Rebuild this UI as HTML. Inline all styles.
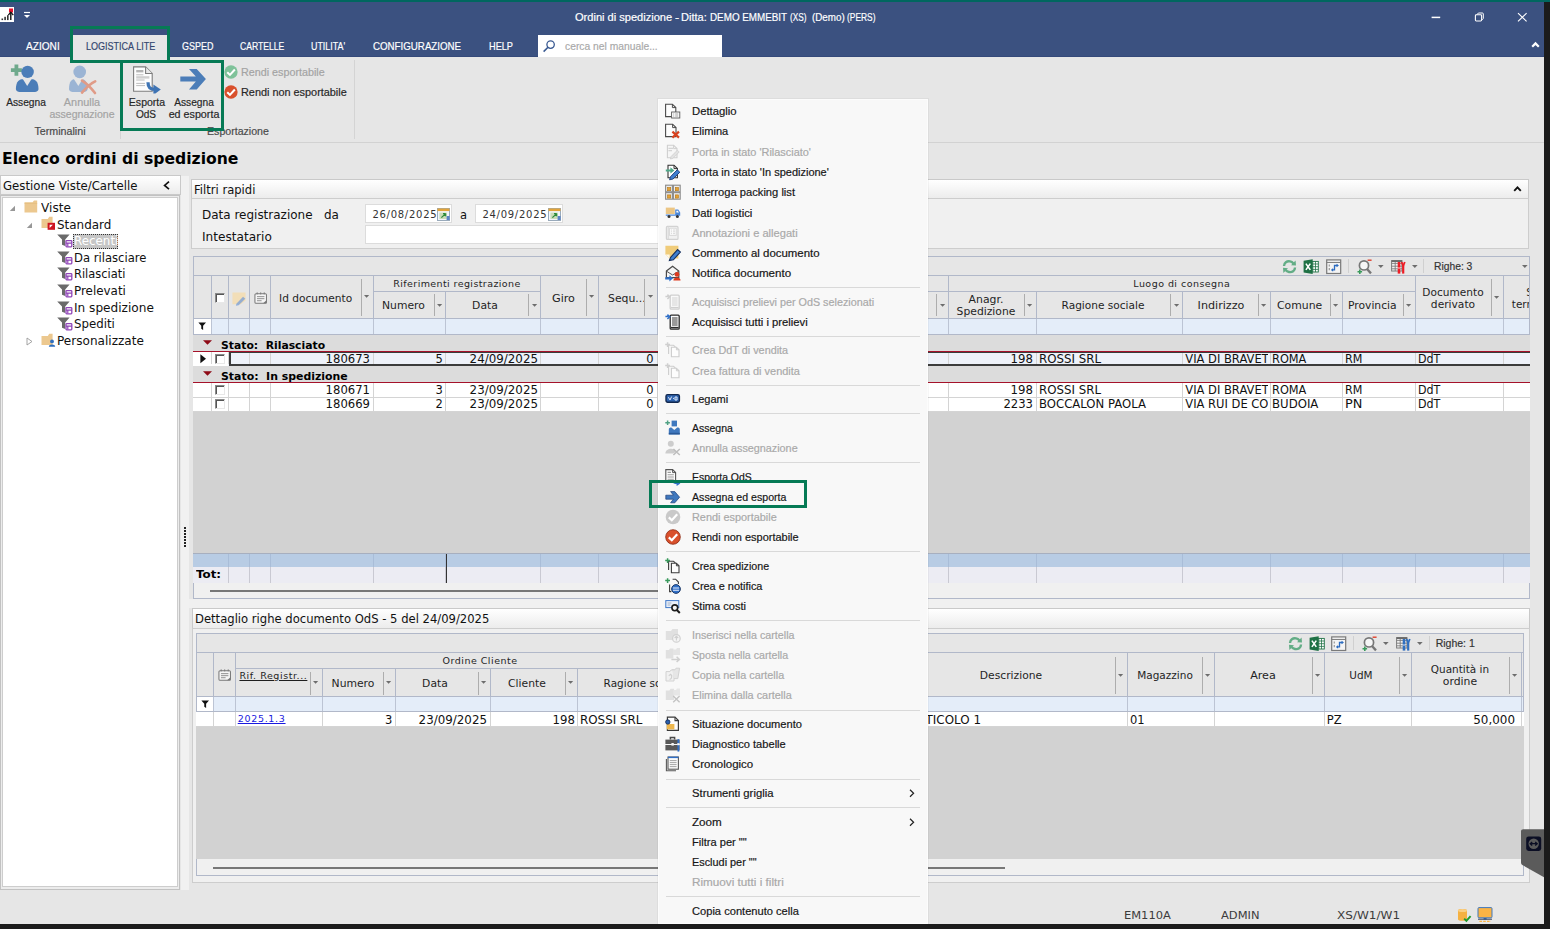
<!DOCTYPE html>
<html lang="it"><head><meta charset="utf-8"><title>Ordini di spedizione</title>
<style>
html,body{margin:0;padding:0}
body{width:1550px;height:929px;position:relative;overflow:hidden;background:#e6e6e6;}
div,span,svg,header,nav,section,aside,footer,menu,h1,a{position:absolute;box-sizing:border-box;margin:0;padding:0;display:block}
svg{overflow:visible}
.t{white-space:pre;font-weight:normal}
.s{font-family:"Liberation Sans",sans-serif;-webkit-text-stroke:0.18px currentColor}
.v{font-family:"DejaVu Sans","Liberation Sans",sans-serif}
.hl{pointer-events:none}
</style></head>
<body>
<header class="titlebar" style="left:0px;top:2px;width:1544px;height:55px;background:#3b5180;">
<div style="left:0px;top:5px;width:14px;height:15px;background:#fff;"></div>
<svg style="left:0px;top:5px;" width="14" height="15" viewBox="0 0 14 15"><rect x="9" y="1.5" width="4" height="4" fill="#e8112d"/><path d="M10.8 5 L10.8 13" stroke="#111" stroke-width="1.4"/><path d="M8.3 8.2 L10.8 5.2 L13.3 8.2" fill="none" stroke="#111" stroke-width="1.3"/><rect x="1.5" y="11.5" width="1.6" height="1.6" fill="#333"/><rect x="4.3" y="9.8" width="1.6" height="3.3" fill="#333"/><rect x="7" y="8.2" width="1.6" height="4.9" fill="#333"/></svg>
<svg style="left:22px;top:8px;" width="10" height="10" viewBox="0 0 10 10"><path d="M2 2.5 H8" stroke="#fff" stroke-width="1.2"/><path d="M2 5 H8 L5 8 Z" fill="#fff"/></svg>
<div class="title" style="left:570px;top:8px;width:312px;height:16px;">
<span class="t s" style="top:1px;font-size:10.5px;line-height:12px;left:5.23px;color:#fff;transform:scaleX(1.0533);transform-origin:0 0;">Ordini di spedizione</span>
<span class="t s" style="top:1px;font-size:10.5px;line-height:12px;left:105.43px;color:#fff;transform:scaleX(1.1814);transform-origin:0 0;">-</span>
<span class="t s" style="top:1px;font-size:10.5px;line-height:12px;left:111.23px;color:#fff;transform:scaleX(1.0538);transform-origin:0 0;">Ditta:</span>
<span class="t s" style="top:1px;font-size:10.5px;line-height:12px;left:139.83px;color:#fff;transform:scaleX(0.9376);transform-origin:0 0;">DEMO EMMEBIT</span>
<span class="t s" style="top:1px;font-size:10.5px;line-height:12px;left:219.53px;color:#fff;transform:scaleX(0.7874);transform-origin:0 0;">(XS)</span>
<span class="t s" style="top:1px;font-size:10.5px;line-height:12px;left:241.53px;color:#fff;transform:scaleX(0.9349);transform-origin:0 0;">(Demo)</span>
<span class="t s" style="top:1px;font-size:10.5px;line-height:12px;left:277.33px;color:#fff;transform:scaleX(0.7989);transform-origin:0 0;">(PERS)</span>
</div>
<svg style="left:1428px;top:8px;" width="16" height="14" viewBox="0 0 16 14"><path d="M3.6 7.4 H12.2" stroke="#fff" stroke-width="1.5"/></svg>
<svg style="left:1472px;top:8px;" width="16" height="14" viewBox="0 0 16 14"><rect x="3.4" y="4.8" width="6.2" height="6.2" rx="0.9" fill="none" stroke="#fff" stroke-width="1.1"/><path d="M5 4.6 L6.4 3 H10.4 a0.9 0.9 0 0 1 0.9 0.9 V8.4 L9.8 10" fill="none" stroke="#fff" stroke-width="1"/></svg>
<svg style="left:1514px;top:8px;" width="16" height="14" viewBox="0 0 16 14"><path d="M4 3.2 L12.6 11.4 M12.6 3.2 L4 11.4" stroke="#fff" stroke-width="1.15"/></svg>
<svg style="left:1530px;top:38px;" width="11" height="9" viewBox="0 0 11 9"><path d="M2.2 6.8 L5.5 3.4 L8.8 6.8" fill="none" stroke="#fff" stroke-width="2.2"/></svg>
<div style="left:0px;top:54px;width:1544px;height:1px;background:#34497a;"></div>
<nav class="tabs" style="left:0px;top:33px;width:540px;height:22px;">
<div style="left:73px;top:0px;width:94px;height:23px;background:#e6e6e6;"></div>
<span class="t s" style="top:6px;font-size:10.2px;line-height:11px;left:26.04px;color:#fff;transform:scaleX(0.9925);transform-origin:0 0;">AZIONI</span>
<span class="t s" style="top:6px;font-size:10.2px;line-height:11px;left:86.14px;color:#33466f;transform:scaleX(0.8858);transform-origin:0 0;">LOGISTICA LITE</span>
<span class="t s" style="top:6px;font-size:10.2px;line-height:11px;left:182.14px;color:#fff;transform:scaleX(0.8806);transform-origin:0 0;">GSPED</span>
<span class="t s" style="top:6px;font-size:10.2px;line-height:11px;left:240.24px;color:#fff;transform:scaleX(0.8443);transform-origin:0 0;">CARTELLE</span>
<span class="t s" style="top:6px;font-size:10.2px;line-height:11px;left:311.24px;color:#fff;transform:scaleX(0.8719);transform-origin:0 0;">UTILITA'</span>
<span class="t s" style="top:6px;font-size:10.2px;line-height:11px;left:373.24px;color:#fff;transform:scaleX(0.9550);transform-origin:0 0;">CONFIGURAZIONE</span>
<span class="t s" style="top:6px;font-size:10.2px;line-height:11px;left:488.64px;color:#fff;transform:scaleX(0.9019);transform-origin:0 0;">HELP</span>
</nav>
<div class="search" style="left:538px;top:33px;width:184px;height:22px;background:#fff;">
<svg style="left:4px;top:4px;" width="14" height="14" viewBox="0 0 14 14"><circle cx="8.6" cy="5.6" r="3.7" fill="none" stroke="#3a5a92" stroke-width="1.3"/><path d="M6 8.3 L1.6 12.6" stroke="#3a5a92" stroke-width="1.6"/></svg>
<span class="t s" style="top:5px;font-size:10.5px;line-height:12px;left:26.63px;color:#a9a9a9;transform:scaleX(0.9807);transform-origin:0 0;">cerca nel manuale...</span>
</div>
</header>
<section class="ribbon" style="left:0px;top:57px;width:1544px;height:86px;background:#e6e6e6;">
<div style="left:0px;top:85px;width:1544px;height:1px;background:#d2d2d2;"></div>
<svg style="left:10px;top:6px;" width="30" height="30" viewBox="0 0 30 30"><path d="M6.4 1.6 V12.7 M0.9 7.15 H11.9" stroke="#6fa98c" stroke-width="3.8"/><circle cx="17.6" cy="8.9" r="6.2" fill="#4b7db8"/><path d="M5.9 26.1 C5.9 17.8 9.968 16.3 12.68 16.3 H21.72 C24.432 16.3 28.5 17.8 28.5 26.1 C28.5 28.6 25.5 29.1 23.5 29.1 H10.9 C8.9 29.1 5.9 28.6 5.9 26.1 Z" fill="#4b7db8"/><path d="M12.799999999999999 16.1 L17.2 22.9 L21.6 16.1 Z" fill="#e6e6e6"/></svg>
<span class="t s" style="top:39px;font-size:10.5px;line-height:12px;left:-274.3px;width:600px;text-align:center;color:#262626;transform:scaleX(0.9721);transform-origin:50% 0;">Assegna</span>
<svg style="left:68px;top:6px;" width="30" height="30" viewBox="0 0 30 30"><circle cx="11.7" cy="8.9" r="6.3" fill="#9bb4d4"/><path d="M1 26.1 C1 17.8 4.348000000000001 16.3 6.58 16.3 H14.020000000000001 C16.252000000000002 16.3 19.6 17.8 19.6 26.1 C19.6 28.6 16.6 29.1 14.600000000000001 29.1 H6 C4 29.1 1 28.6 1 26.1 Z" fill="#9bb4d4"/><path d="M5.9 16.1 L10.3 22.9 L14.700000000000001 16.1 Z" fill="#e6e6e6"/><path d="M14 17.6 C18 20 23.6 25.6 27 30 M27.2 18.4 C23 20.4 17.4 25.6 14 29.6" stroke="#e09b87" stroke-width="2.6" stroke-linecap="round" fill="none"/></svg>
<span class="t s" style="top:39px;font-size:10.5px;line-height:12px;left:-218.4px;width:600px;text-align:center;color:#a3a3a3;transform:scaleX(1.0372);transform-origin:50% 0;">Annulla</span>
<span class="t s" style="top:51px;font-size:10.5px;line-height:12px;left:-218.4px;width:600px;text-align:center;color:#a3a3a3;transform:scaleX(1.0050);transform-origin:50% 0;">assegnazione</span>
<span class="t s" style="top:68px;font-size:10.5px;line-height:12px;left:-240px;width:600px;text-align:center;color:#4a4a4a;transform:scaleX(1.0189);transform-origin:50% 0;">Terminalini</span>
<div style="left:120px;top:3px;width:1px;height:79px;background:#d4d4d4;"></div>
<svg style="left:132px;top:8px;" width="30" height="30" viewBox="0 0 30 30"><path d="M1.6 1.9 H13.6 L20.2 8.5 V26.3 H1.6 Z" fill="#fdfdfd" stroke="#7d7d7d" stroke-width="1.1"/><path d="M13.6 1.9 V8.5 H20.2" fill="#e9e9e9" stroke="#7d7d7d" stroke-width="1.1"/><path d="M4.2 5 H11.4 V7.4 H4.2 Z" fill="#b4b4b4"/><path d="M4.2 9.8 H11.4 M4.2 15 H12.6 M4.2 18.4 H13 M4.2 20.6 H13" stroke="#bdbdbd" stroke-width="1"/><path d="M4.2 12.4 H17.4" stroke="#cfcfcf" stroke-width="2.4"/><path d="M16 17.2 C16 22.8 18.4 24.4 23 24.4" fill="none" stroke="#3f74b4" stroke-width="3.3"/><path d="M21.4 19.6 L28.8 24.6 L23.4 28.6 L21.4 28.6 Z" fill="#3f74b4"/></svg>
<span class="t s" style="top:39px;font-size:10.5px;line-height:12px;left:-153.5px;width:600px;text-align:center;color:#262626;transform:scaleX(1.0041);transform-origin:50% 0;">Esporta</span>
<span class="t s" style="top:51px;font-size:10.5px;line-height:12px;left:-153.8px;width:600px;text-align:center;color:#262626;transform:scaleX(0.9581);transform-origin:50% 0;">OdS</span>
<svg style="left:178px;top:10px;" width="30" height="24" viewBox="0 0 30 24"><path d="M2.3 9.4 H17.85 L11 2.1 H18.7 L27.9 11.9 L18.7 22.4 H11 L17.85 14.6 H2.3 Z" fill="#4b7db8"/></svg>
<span class="t s" style="top:39px;font-size:10.5px;line-height:12px;left:-106.4px;width:600px;text-align:center;color:#262626;transform:scaleX(0.9721);transform-origin:50% 0;">Assegna</span>
<span class="t s" style="top:51px;font-size:10.5px;line-height:12px;left:-106.4px;width:600px;text-align:center;color:#262626;transform:scaleX(1.0224);transform-origin:50% 0;">ed esporta</span>
<svg style="left:224px;top:8px;" width="14" height="14" viewBox="0 0 16 16"><circle cx="8" cy="8" r="7.6" fill="#7fc29a"/><path d="M3.7 8.3 L6.8 11.3 L12.4 5.1" fill="none" stroke="#fff" stroke-width="2.3"/></svg>
<span class="t s" style="top:9px;font-size:10.5px;line-height:12px;left:240.63px;color:#a3a3a3;transform:scaleX(1.0247);transform-origin:0 0;">Rendi esportabile</span>
<svg style="left:224px;top:28px;" width="14" height="14" viewBox="0 0 16 16"><circle cx="8" cy="8" r="7.6" fill="#d9502c"/><path d="M3.7 8.3 L6.8 11.3 L12.4 5.1" fill="none" stroke="#fff" stroke-width="2.3"/></svg>
<span class="t s" style="top:29px;font-size:10.5px;line-height:12px;left:240.63px;color:#262626;transform:scaleX(1.0350);transform-origin:0 0;">Rendi non esportabile</span>
<span class="t s" style="top:68px;font-size:10.5px;line-height:12px;left:206.63px;color:#4a4a4a;transform:scaleX(1.0104);transform-origin:0 0;">Esportazione</span>
<div style="left:354px;top:3px;width:1px;height:79px;background:#d4d4d4;"></div>
</section>
<div class="hl" style="left:70px;top:26px;width:100px;height:37px;border:3px solid #067a55;"></div>
<div class="hl" style="left:120px;top:60px;width:104px;height:71px;border:3px solid #067a55;"></div>
<h1 class="t v" style="top:150px;font-size:15.5px;line-height:18px;left:2.07px;color:#000;font-weight:bold;transform:scaleX(1.0075);transform-origin:0 0;">Elenco ordini di spedizione</h1>
<aside class="sidebar" style="left:0px;top:175px;width:181px;height:716px;">
<div style="left:0px;top:0px;width:180.5px;height:19.5px;background:linear-gradient(#fff,#ececec);border:1px solid #c9c9c9;"></div>
<span class="t v" style="top:4px;font-size:11.5px;line-height:14px;left:2.91px;color:#111;transform:scaleX(1.0191);transform-origin:0 0;">Gestione Viste/Cartelle</span>
<svg style="left:162px;top:4.5px;" width="9" height="11" viewBox="0 0 9 11"><path d="M7 1.7 L2.6 5.4 L7 9.1" fill="none" stroke="#111" stroke-width="1.7"/></svg>
<div style="left:0px;top:20px;width:180px;height:695px;background:#ececec;border:1px solid #c2c2c2;"></div>
<div style="left:2px;top:22px;width:176px;height:690px;background:#fff;border:1px solid #cdcdcd;"></div>
<svg style="left:8px;top:29px;" width="8" height="8" viewBox="0 0 8 8"><path d="M7 1.8 V7 H1.8 Z" fill="#979797"/></svg>
<svg style="left:24px;top:25px;" width="14" height="13" viewBox="0 0 14 13"><path d="M0.5 2.2 H8.6 L10 0.6 H13.2 V12.4 H0.5 Z" fill="#ecc88f"/><path d="M0.5 3.4 H13.2" stroke="#e0b878" stroke-width="0.6"/></svg>
<span class="t v" style="top:26px;font-size:11.5px;line-height:14px;left:40.61px;color:#111;transform:scaleX(1.0525);transform-origin:0 0;">Viste</span>
<svg style="left:25px;top:45.5px;" width="8" height="8" viewBox="0 0 8 8"><path d="M7 1.8 V7 H1.8 Z" fill="#979797"/></svg>
<svg style="left:41px;top:41.4px;" width="15" height="14" viewBox="0 0 15 14"><path d="M0.5 3 H6.8 L8.2 0.8 H11.6 V12 H0.5 Z" fill="#ecc88f"/><rect x="6.6" y="6.8" width="7.4" height="7" fill="#cf1420"/><path d="M8.6 12 V8.7 H11.9 Z" fill="#fff"/></svg>
<span class="t v" style="top:43px;font-size:11.5px;line-height:14px;left:57.31px;color:#111;transform:scaleX(1.0392);transform-origin:0 0;">Standard</span>
<svg style="left:56.5px;top:59.4px;" width="16" height="14" viewBox="0 0 16 14"><path d="M0.2 0.4 H12.6 L8.2 5.6 V12 L5 10.8 V5.6 Z" fill="#6a6a6a"/><rect x="9" y="6.6" width="5.8" height="6.2" rx="0.7" fill="#fff" stroke="#8f44b8" stroke-width="1.3"/><path d="M9 9.2 H14.8 M10.8 9.2 V12.6" stroke="#8f44b8" stroke-width="1.2"/></svg>
<div style="left:73px;top:59px;width:45px;height:15px;background:#c6c6c6;border:1px dotted #333;"></div>
<span class="t v" style="top:59px;font-size:11.5px;line-height:14px;left:73.61px;color:#fff;transform:scaleX(1.0332);transform-origin:0 0;">Recenti</span>
<svg style="left:56.5px;top:76.4px;" width="16" height="14" viewBox="0 0 16 14"><path d="M0.2 0.4 H12.6 L8.2 5.6 V12 L5 10.8 V5.6 Z" fill="#6a6a6a"/><rect x="9" y="6.6" width="5.8" height="6.2" rx="0.7" fill="#fff" stroke="#8f44b8" stroke-width="1.3"/><path d="M9 9.2 H14.8 M10.8 9.2 V12.6" stroke="#8f44b8" stroke-width="1.2"/></svg>
<span class="t v" style="top:76px;font-size:11.5px;line-height:14px;left:73.61px;color:#111;transform:scaleX(1.0075);transform-origin:0 0;">Da rilasciare</span>
<svg style="left:56.5px;top:92.4px;" width="16" height="14" viewBox="0 0 16 14"><path d="M0.2 0.4 H12.6 L8.2 5.6 V12 L5 10.8 V5.6 Z" fill="#6a6a6a"/><rect x="9" y="6.6" width="5.8" height="6.2" rx="0.7" fill="#fff" stroke="#8f44b8" stroke-width="1.3"/><path d="M9 9.2 H14.8 M10.8 9.2 V12.6" stroke="#8f44b8" stroke-width="1.2"/></svg>
<span class="t v" style="top:92px;font-size:11.5px;line-height:14px;left:73.61px;color:#111;transform:scaleX(0.9938);transform-origin:0 0;">Rilasciati</span>
<svg style="left:56.5px;top:109.4px;" width="16" height="14" viewBox="0 0 16 14"><path d="M0.2 0.4 H12.6 L8.2 5.6 V12 L5 10.8 V5.6 Z" fill="#6a6a6a"/><rect x="9" y="6.6" width="5.8" height="6.2" rx="0.7" fill="#fff" stroke="#8f44b8" stroke-width="1.3"/><path d="M9 9.2 H14.8 M10.8 9.2 V12.6" stroke="#8f44b8" stroke-width="1.2"/></svg>
<span class="t v" style="top:109px;font-size:11.5px;line-height:14px;left:73.61px;color:#111;transform:scaleX(1.0350);transform-origin:0 0;">Prelevati</span>
<svg style="left:56.5px;top:126.4px;" width="16" height="14" viewBox="0 0 16 14"><path d="M0.2 0.4 H12.6 L8.2 5.6 V12 L5 10.8 V5.6 Z" fill="#6a6a6a"/><rect x="9" y="6.6" width="5.8" height="6.2" rx="0.7" fill="#fff" stroke="#8f44b8" stroke-width="1.3"/><path d="M9 9.2 H14.8 M10.8 9.2 V12.6" stroke="#8f44b8" stroke-width="1.2"/></svg>
<span class="t v" style="top:126px;font-size:11.5px;line-height:14px;left:73.61px;color:#111;transform:scaleX(1.0534);transform-origin:0 0;">In spedizione</span>
<svg style="left:56.5px;top:142.4px;" width="16" height="14" viewBox="0 0 16 14"><path d="M0.2 0.4 H12.6 L8.2 5.6 V12 L5 10.8 V5.6 Z" fill="#6a6a6a"/><rect x="9" y="6.6" width="5.8" height="6.2" rx="0.7" fill="#fff" stroke="#8f44b8" stroke-width="1.3"/><path d="M9 9.2 H14.8 M10.8 9.2 V12.6" stroke="#8f44b8" stroke-width="1.2"/></svg>
<span class="t v" style="top:142px;font-size:11.5px;line-height:14px;left:73.61px;color:#111;transform:scaleX(1.0252);transform-origin:0 0;">Spediti</span>
<svg style="left:26px;top:161.5px;" width="7" height="9" viewBox="0 0 7 9"><path d="M1 1 L6 4.5 L1 8 Z" fill="#fff" stroke="#9a9a9a" stroke-width="0.9"/></svg>
<svg style="left:41px;top:157.6px;" width="15" height="14" viewBox="0 0 15 14"><path d="M0.5 3 H6.8 L8.2 0.8 H11.6 V12 H0.5 Z" fill="#ecc88f"/><circle cx="11" cy="8.4" r="1.9" fill="#2f6fc0"/><path d="M7.8 13.8 C7.8 10.6 14.2 10.6 14.2 13.8 Z" fill="#2f6fc0"/></svg>
<span class="t v" style="top:159px;font-size:11.5px;line-height:14px;left:57.31px;color:#111;transform:scaleX(1.0493);transform-origin:0 0;">Personalizzate</span>
</aside>
<div style="left:180.5px;top:176px;width:8px;height:714px;background:#f1f1f1;"></div>
<div style="left:183.5px;top:527px;width:2px;height:1.6px;background:#222;"></div>
<div style="left:183.5px;top:530px;width:2px;height:1.6px;background:#222;"></div>
<div style="left:183.5px;top:533px;width:2px;height:1.6px;background:#222;"></div>
<div style="left:183.5px;top:536px;width:2px;height:1.6px;background:#222;"></div>
<div style="left:183.5px;top:539px;width:2px;height:1.6px;background:#222;"></div>
<div style="left:183.5px;top:542px;width:2px;height:1.6px;background:#222;"></div>
<div style="left:183.5px;top:545px;width:2px;height:1.6px;background:#222;"></div>
<section class="filters" style="left:191px;top:180px;width:1338px;height:70px;">
<div style="left:0px;top:-1px;width:1338px;height:20px;background:linear-gradient(#fff,#ececec);border:1px solid #c9c9c9;"></div>
<span class="t v" style="top:3px;font-size:11.5px;line-height:14px;left:3.31px;color:#111;transform:scaleX(1.0057);transform-origin:0 0;">Filtri rapidi</span>
<svg style="left:1321px;top:3.5px;" width="11" height="9" viewBox="0 0 11 9"><path d="M2.2 6.8 L5.5 3.4 L8.8 6.8" fill="none" stroke="#111" stroke-width="1.9"/></svg>
<div style="left:0px;top:18px;width:1338px;height:51px;background:#f0f0f0;border:1px solid #cdcdcd;"></div>
<span class="t v" style="top:28px;font-size:11.5px;line-height:14px;left:10.81px;color:#111;transform:scaleX(1.0418);transform-origin:0 0;">Data registrazione   da</span>
<span class="t v" style="top:50px;font-size:11.5px;line-height:14px;left:10.81px;color:#111;transform:scaleX(1.0536);transform-origin:0 0;">Intestatario</span>
<div style="left:173.5px;top:24px;width:87.5px;height:19px;background:#fff;border:1px solid #dcdcdc;"></div>
<span class="t v" style="top:29px;font-size:10px;line-height:11px;left:181.4px;color:#333;letter-spacing:0.73px;">26/08/2025</span>
<svg style="left:246px;top:27.6px;" width="13" height="13" viewBox="0 0 13 13"><rect x="0.5" y="0.5" width="12" height="12" fill="#f3f6fb" stroke="#9ab" stroke-width="1"/><rect x="0.5" y="0.5" width="12" height="2.6" fill="#e2a43a"/><rect x="2.4" y="4.6" width="7.4" height="6.4" fill="#c9dcb8"/><path d="M4.4 9.6 L8.6 5.6 M8.6 5.6 H6 M8.6 5.6 V8.2" stroke="#2e8b3a" stroke-width="1.3" fill="none"/><rect x="9.6" y="8" width="3" height="4" fill="#5b84c4"/></svg>
<span class="t v" style="top:28px;font-size:11.5px;line-height:14px;left:268.91px;color:#111;">a</span>
<div style="left:284px;top:24px;width:87.5px;height:19px;background:#fff;border:1px solid #dcdcdc;"></div>
<span class="t v" style="top:29px;font-size:10px;line-height:11px;left:291.4px;color:#333;letter-spacing:0.73px;">24/09/2025</span>
<svg style="left:356.5px;top:27.6px;" width="13" height="13" viewBox="0 0 13 13"><rect x="0.5" y="0.5" width="12" height="12" fill="#f3f6fb" stroke="#9ab" stroke-width="1"/><rect x="0.5" y="0.5" width="12" height="2.6" fill="#e2a43a"/><rect x="2.4" y="4.6" width="7.4" height="6.4" fill="#c9dcb8"/><path d="M4.4 9.6 L8.6 5.6 M8.6 5.6 H6 M8.6 5.6 V8.2" stroke="#2e8b3a" stroke-width="1.3" fill="none"/><rect x="9.6" y="8" width="3" height="4" fill="#5b84c4"/></svg>
<div style="left:173.5px;top:45px;width:540px;height:19px;background:#fff;border:1px solid #dcdcdc;"></div>
</section>
<section class="grid main" style="left:192px;top:256px;width:1338px;height:343px;">
<div style="left:1px;top:0px;width:1337px;height:343px;background:#f0f0f0;border:1px solid #b1b8c9;"></div>
<div style="left:1px;top:0px;width:1337px;height:20px;background:#e6e6e6;border:1px solid #b1b8c9;"></div>
<svg style="left:1089.6px;top:3px;" width="15" height="15" viewBox="0 0 15 15"><path d="M2 7 C2 3.6 5 1.8 8 2.4 C9.6 2.7 10.6 3.4 11.4 4.4" fill="none" stroke="#63ad86" stroke-width="2.4"/><path d="M9 6.2 L14 6.6 L13.6 1.4 Z" fill="#63ad86"/><path d="M13 8.4 C13 11.8 10 13.6 7 13 C5.4 12.7 4.4 12 3.6 11" fill="none" stroke="#63ad86" stroke-width="2.4"/><path d="M6 9.2 L1 8.8 L1.4 14 Z" fill="#63ad86"/></svg>
<svg style="left:1111.4px;top:2.8px;" width="16" height="15.4" viewBox="0 0 15.4 15.4"><rect x="7" y="2.4" width="8" height="10.6" fill="#fff" stroke="#1f7145" stroke-width="0.9"/><path d="M9.5 2.4 V13 M12.2 2.4 V13 M7 5 H15 M7 7.7 H15 M7 10.4 H15" stroke="#1f7145" stroke-width="0.8"/><path d="M0.3 1.8 L9.4 0.3 V15 L0.3 13.5 Z" fill="#1f7145"/><path d="M2.6 4.6 L7 10.9 M7 4.6 L2.6 10.9" stroke="#fff" stroke-width="1.6"/></svg>
<svg style="left:1133.6px;top:2.8px;" width="15.4" height="15.4" viewBox="0 0 15.2 15.2"><rect x="0.7" y="0.9" width="13.8" height="13.4" fill="#f4f4f4" stroke="#7a7a7a" stroke-width="1.2"/><path d="M0.7 3.4 H14.5" stroke="#7a7a7a" stroke-width="1"/><path d="M3.2 5.4 V7.4 M3.2 9 V11" stroke="#888" stroke-width="1"/><path d="M5.6 10.8 H8.4 V6.4 H11.6" fill="none" stroke="#2d6cc0" stroke-width="1.3"/><path d="M10.4 4.6 L12.8 6.4 L10.4 8.2 Z M7 9 L5 10.8 L7 12.6 Z" fill="#2d6cc0"/></svg>
<svg style="left:1164.8px;top:2.8px;" width="15.4" height="15.8" viewBox="0 0 15.4 15.8"><circle cx="7" cy="6.4" r="4.6" fill="#f6f6f6" stroke="#777" stroke-width="1.7"/><path d="M10 10 L14 14.4" stroke="#777" stroke-width="2.3"/><path d="M10.6 1.2 H14.6" stroke="#e0402c" stroke-width="1.4"/><path d="M2.8 10.4 V15 M0.5 12.7 H5.1" stroke="#3a9a5c" stroke-width="1.6"/></svg>
<svg style="left:1199px;top:3.2px;" width="15" height="15" viewBox="0 0 15 15"><rect x="0.6" y="1.6" width="10.4" height="10.4" fill="#f2f2f2" stroke="#7c7c7c" stroke-width="1"/><path d="M0.6 4.4 H11 M0.6 7.2 H11 M0.6 9.8 H11 M4.2 1.6 V12 M7.6 1.6 V12" stroke="#7c7c7c" stroke-width="0.9"/><rect x="0.6" y="1.2" width="10.4" height="1.8" fill="#6a6a6a"/><path d="M8 3 V14.6" stroke="#ee1c25" stroke-width="2.6"/><path d="M6.6 9 H9.4" stroke="#fff" stroke-width="0.8"/><path d="M10.6 3 L12.2 7 L13.8 3" fill="none" stroke="#ee1c25" stroke-width="1.8"/><path d="M12.2 6.4 V14.6" stroke="#ee1c25" stroke-width="2.2"/></svg>
<div style="left:1156px;top:3px;width:1px;height:14px;background:#d0d0d0;"></div>
<div style="left:1231px;top:3px;width:1px;height:14px;background:#d0d0d0;"></div>
<svg style="left:1185.6px;top:9.4px;" width="5.6" height="3" viewBox="0 0 7 3.6"><path d="M0 0 H7 L3.5 3.6 Z" fill="#6d6d6d"/></svg>
<svg style="left:1219.8px;top:9.4px;" width="5.6" height="3" viewBox="0 0 7 3.6"><path d="M0 0 H7 L3.5 3.6 Z" fill="#6d6d6d"/></svg>
<span class="t s" style="top:4px;font-size:10.5px;line-height:12px;left:1241.63px;color:#333;transform:scaleX(0.9802);transform-origin:0 0;">Righe: 3</span>
<svg style="left:1330.2px;top:9.4px;" width="5.6" height="3" viewBox="0 0 7 3.6"><path d="M0 0 H7 L3.5 3.6 Z" fill="#6d6d6d"/></svg>
<div style="left:1px;top:20px;width:1337px;height:42px;background:#e6e6e6;border-left:1px solid #b1b8c9;border-right:1px solid #b1b8c9;"></div>
<div style="left:19px;top:20px;width:1px;height:42px;background:#b1b8c9;"></div>
<div style="left:36px;top:20px;width:1px;height:42px;background:#b1b8c9;"></div>
<div style="left:57px;top:20px;width:1px;height:42px;background:#b1b8c9;"></div>
<div style="left:78px;top:20px;width:1px;height:42px;background:#b1b8c9;"></div>
<div style="left:181px;top:20px;width:1px;height:42px;background:#b1b8c9;"></div>
<div style="left:253px;top:36px;width:1px;height:26px;background:#b1b8c9;"></div>
<div style="left:348px;top:20px;width:1px;height:42px;background:#b1b8c9;"></div>
<div style="left:406px;top:20px;width:1px;height:42px;background:#b1b8c9;"></div>
<div style="left:465px;top:20px;width:1px;height:42px;background:#b1b8c9;"></div>
<div style="left:756px;top:20px;width:1px;height:42px;background:#b1b8c9;"></div>
<div style="left:844px;top:36px;width:1px;height:26px;background:#b1b8c9;"></div>
<div style="left:990px;top:36px;width:1px;height:26px;background:#b1b8c9;"></div>
<div style="left:1078px;top:36px;width:1px;height:26px;background:#b1b8c9;"></div>
<div style="left:1150px;top:36px;width:1px;height:26px;background:#b1b8c9;"></div>
<div style="left:1223px;top:20px;width:1px;height:42px;background:#b1b8c9;"></div>
<div style="left:1311px;top:20px;width:1px;height:42px;background:#b1b8c9;"></div>
<div style="left:181px;top:35px;width:168px;height:1px;background:#b1b8c9;"></div>
<div style="left:465px;top:35px;width:759px;height:1px;background:#b1b8c9;"></div>
<div style="left:1px;top:62px;width:1337px;height:1px;background:#b1b8c9;"></div>
<div style="left:22.7px;top:36.5px;width:10px;height:10px;background:#fff;border:1px solid #8a8a8a;border-right-color:#e8e8e8;border-bottom-color:#e8e8e8;box-shadow:inset 1px 1px 0 #555;"></div>
<svg style="left:40px;top:35.5px;" width="14" height="14" viewBox="0 0 16 16"><path d="M0.5 0.5 H15.5 V9.6 L10 14 H0.5 Z" fill="#f2deb8"/><path d="M5 13.4 L12.6 5.4 L15.2 7.6 L7.6 15 L4.4 15.8 Z" fill="#6f9ad8" opacity="0.7"/></svg>
<svg style="left:62px;top:35.6px;" width="13.4" height="13" viewBox="0 0 14 14"><rect x="0.8" y="1.8" width="12.4" height="10.4" rx="1.2" fill="#f6f6f6" stroke="#777" stroke-width="1.1"/><path d="M3.2 0.4 V2.6 M7 0.4 V2.6 M10.8 0.4 V2.6" stroke="#777" stroke-width="1"/><path d="M3 5 H11 M3 7.2 H11 M3 9.4 H8" stroke="#888" stroke-width="1"/><path d="M9.6 12.2 L13.2 9 V12.2 Z" fill="#777"/></svg>
<span class="t v" style="top:36px;font-size:10.5px;line-height:12px;left:87.37px;color:#1f1f1f;transform:scaleX(1.0103);transform-origin:0 0;">Id documento</span>
<div style="left:169px;top:23px;width:1px;height:37px;background:#adadad;"></div>
<svg style="left:172.1px;top:39.4px;" width="5.2" height="2.8" viewBox="0 0 7 3.6"><path d="M0 0 H7 L3.5 3.6 Z" fill="#6d6d6d"/></svg>
<span class="t v" style="top:22px;font-size:9.5px;line-height:11px;left:-35px;width:600px;text-align:center;color:#1f1f1f;letter-spacing:0.40px;">Riferimenti registrazione</span>
<span class="t v" style="top:43px;font-size:10.5px;line-height:12px;left:189.97px;color:#1f1f1f;transform:scaleX(1.0274);transform-origin:0 0;">Numero</span>
<div style="left:242px;top:38px;width:1px;height:22px;background:#adadad;"></div>
<svg style="left:244.8px;top:48px;" width="5.2" height="2.8" viewBox="0 0 7 3.6"><path d="M0 0 H7 L3.5 3.6 Z" fill="#6d6d6d"/></svg>
<span class="t v" style="top:43px;font-size:10.5px;line-height:12px;left:-7px;width:600px;text-align:center;color:#1f1f1f;transform:scaleX(1.0272);transform-origin:50% 0;">Data</span>
<div style="left:336px;top:38px;width:1px;height:22px;background:#adadad;"></div>
<svg style="left:339.7px;top:48px;" width="5.2" height="2.8" viewBox="0 0 7 3.6"><path d="M0 0 H7 L3.5 3.6 Z" fill="#6d6d6d"/></svg>
<span class="t v" style="top:36px;font-size:10.5px;line-height:12px;left:359.97px;color:#1f1f1f;transform:scaleX(1.0640);transform-origin:0 0;">Giro</span>
<div style="left:394px;top:23px;width:1px;height:37px;background:#adadad;"></div>
<svg style="left:397.4px;top:39.4px;" width="5.2" height="2.8" viewBox="0 0 7 3.6"><path d="M0 0 H7 L3.5 3.6 Z" fill="#6d6d6d"/></svg>
<span class="t v" style="top:36px;font-size:10.5px;line-height:12px;left:415.77px;color:#1f1f1f;transform:scaleX(1.0327);transform-origin:0 0;">Sequ...</span>
<div style="left:452px;top:23px;width:1px;height:37px;background:#adadad;"></div>
<svg style="left:455.9px;top:39.4px;" width="5.2" height="2.8" viewBox="0 0 7 3.6"><path d="M0 0 H7 L3.5 3.6 Z" fill="#6d6d6d"/></svg>
<div style="left:744px;top:38px;width:1px;height:22px;background:#adadad;"></div>
<svg style="left:747.7px;top:47.5px;" width="5.2" height="2.8" viewBox="0 0 7 3.6"><path d="M0 0 H7 L3.5 3.6 Z" fill="#6d6d6d"/></svg>
<span class="t v" style="top:22px;font-size:9.5px;line-height:11px;left:689.83px;width:600px;text-align:center;color:#1f1f1f;letter-spacing:0.46px;">Luogo di consegna</span>
<span class="t v" style="top:37px;font-size:10.5px;line-height:12px;left:494px;width:600px;text-align:center;color:#1f1f1f;transform:scaleX(1.0333);transform-origin:50% 0;">Anagr.</span>
<span class="t v" style="top:49px;font-size:10.5px;line-height:12px;left:494px;width:600px;text-align:center;color:#1f1f1f;transform:scaleX(1.0247);transform-origin:50% 0;">Spedizione</span>
<div style="left:832px;top:38px;width:1px;height:22px;background:#adadad;"></div>
<svg style="left:835px;top:47.5px;" width="5.2" height="2.8" viewBox="0 0 7 3.6"><path d="M0 0 H7 L3.5 3.6 Z" fill="#6d6d6d"/></svg>
<span class="t v" style="top:43px;font-size:10.5px;line-height:12px;left:611.4px;width:600px;text-align:center;color:#1f1f1f;transform:scaleX(1.0061);transform-origin:50% 0;">Ragione sociale</span>
<div style="left:978px;top:38px;width:1px;height:22px;background:#adadad;"></div>
<svg style="left:981.6px;top:47.5px;" width="5.2" height="2.8" viewBox="0 0 7 3.6"><path d="M0 0 H7 L3.5 3.6 Z" fill="#6d6d6d"/></svg>
<span class="t v" style="top:43px;font-size:10.5px;line-height:12px;left:728.8px;width:600px;text-align:center;color:#1f1f1f;transform:scaleX(1.0624);transform-origin:50% 0;">Indirizzo</span>
<div style="left:1066px;top:38px;width:1px;height:22px;background:#adadad;"></div>
<svg style="left:1069px;top:47.5px;" width="5.2" height="2.8" viewBox="0 0 7 3.6"><path d="M0 0 H7 L3.5 3.6 Z" fill="#6d6d6d"/></svg>
<span class="t v" style="top:43px;font-size:10.5px;line-height:12px;left:1085.37px;color:#1f1f1f;transform:scaleX(1.0341);transform-origin:0 0;">Comune</span>
<div style="left:1138px;top:38px;width:1px;height:22px;background:#adadad;"></div>
<svg style="left:1141.4px;top:47.5px;" width="5.2" height="2.8" viewBox="0 0 7 3.6"><path d="M0 0 H7 L3.5 3.6 Z" fill="#6d6d6d"/></svg>
<span class="t v" style="top:43px;font-size:10.5px;line-height:12px;left:1156.37px;color:#1f1f1f;transform:scaleX(1.0227);transform-origin:0 0;">Provincia</span>
<div style="left:1211px;top:38px;width:1px;height:22px;background:#adadad;"></div>
<svg style="left:1214.4px;top:47.5px;" width="5.2" height="2.8" viewBox="0 0 7 3.6"><path d="M0 0 H7 L3.5 3.6 Z" fill="#6d6d6d"/></svg>
<span class="t v" style="top:30px;font-size:10.5px;line-height:12px;left:961.4px;width:600px;text-align:center;color:#1f1f1f;transform:scaleX(1.0071);transform-origin:50% 0;">Documento</span>
<span class="t v" style="top:42px;font-size:10.5px;line-height:12px;left:961.4px;width:600px;text-align:center;color:#1f1f1f;transform:scaleX(1.0160);transform-origin:50% 0;">derivato</span>
<div style="left:1299px;top:23px;width:1px;height:37px;background:#adadad;"></div>
<svg style="left:1301.8px;top:39.7px;" width="5.2" height="2.8" viewBox="0 0 7 3.6"><path d="M0 0 H7 L3.5 3.6 Z" fill="#6d6d6d"/></svg>
<div class="clip" style="left:1312px;top:20px;width:25px;height:42px;overflow:hidden;">
<span class="t v" style="top:10px;font-size:10.5px;line-height:12px;left:22.37px;color:#1f1f1f;">Stato</span>
<span class="t v" style="top:22px;font-size:10.5px;line-height:12px;left:7.77px;color:#1f1f1f;">terminale</span>
</div>
<div style="left:1px;top:63px;width:1337px;height:16px;background:#e4edf9;border-left:1px solid #b1b8c9;border-right:1px solid #b1b8c9;border-bottom:1px solid #b1b8c9;"></div>
<div style="left:2px;top:63px;width:17px;height:15px;background:#fff;"></div>
<svg style="left:6px;top:66.4px;" width="8.4" height="8.4" viewBox="0 0 11 11"><path d="M0.5 0.8 H10.5 L6.7 5 V10.6 L4.3 9 V5 Z" fill="#111"/></svg>
<div style="left:19px;top:63px;width:1px;height:15px;background:#bcc4d4;"></div>
<div style="left:36px;top:63px;width:1px;height:15px;background:#bcc4d4;"></div>
<div style="left:57px;top:63px;width:1px;height:15px;background:#bcc4d4;"></div>
<div style="left:78px;top:63px;width:1px;height:15px;background:#bcc4d4;"></div>
<div style="left:181px;top:63px;width:1px;height:15px;background:#bcc4d4;"></div>
<div style="left:253px;top:63px;width:1px;height:15px;background:#bcc4d4;"></div>
<div style="left:348px;top:63px;width:1px;height:15px;background:#bcc4d4;"></div>
<div style="left:406px;top:63px;width:1px;height:15px;background:#bcc4d4;"></div>
<div style="left:465px;top:63px;width:1px;height:15px;background:#bcc4d4;"></div>
<div style="left:756px;top:63px;width:1px;height:15px;background:#bcc4d4;"></div>
<div style="left:844px;top:63px;width:1px;height:15px;background:#bcc4d4;"></div>
<div style="left:990px;top:63px;width:1px;height:15px;background:#bcc4d4;"></div>
<div style="left:1078px;top:63px;width:1px;height:15px;background:#bcc4d4;"></div>
<div style="left:1150px;top:63px;width:1px;height:15px;background:#bcc4d4;"></div>
<div style="left:1223px;top:63px;width:1px;height:15px;background:#bcc4d4;"></div>
<div style="left:1311px;top:63px;width:1px;height:15px;background:#bcc4d4;"></div>
<div style="left:1px;top:79px;width:1337px;height:16px;background:#dcdcdc;"></div>
<svg style="left:11px;top:84px;" width="9" height="5" viewBox="0 0 9 4.6"><path d="M0 0 H9 L4.5 4.6 Z" fill="#8e0a16"/></svg>
<span class="t v" style="top:83px;font-size:11px;line-height:13px;left:29.14px;color:#000;font-weight:bold;transform:scaleX(0.9823);transform-origin:0 0;">Stato:  Rilasciato</span>
<div style="left:1px;top:95px;width:1337px;height:1px;background:#a5122a;"></div>
<div style="left:1px;top:96px;width:1337px;height:14px;background:#eef2f9;"></div>
<div style="left:1px;top:96px;width:35px;height:14px;background:#fff;"></div>
<div style="left:1px;top:110px;width:1337px;height:16px;background:#dcdcdc;"></div>
<svg style="left:11px;top:115.2px;" width="9" height="5" viewBox="0 0 9 4.6"><path d="M0 0 H9 L4.5 4.6 Z" fill="#8e0a16"/></svg>
<span class="t v" style="top:114px;font-size:11px;line-height:13px;left:29.14px;color:#000;font-weight:bold;transform:scaleX(0.9917);transform-origin:0 0;">Stato:  In spedizione</span>
<div style="left:1px;top:126px;width:1337px;height:1px;background:#a5122a;"></div>
<div style="left:1px;top:127px;width:1337px;height:29px;background:#fff;"></div>
<div style="left:1px;top:141px;width:1337px;height:1px;background:#d4d4d4;"></div>
<div style="left:1px;top:155px;width:1337px;height:1px;background:#d4d4d4;"></div>
<div style="left:19px;top:96px;width:1px;height:12px;background:#d4d4d4;"></div>
<div style="left:19px;top:127px;width:1px;height:29px;background:#d4d4d4;"></div>
<div style="left:36px;top:96px;width:1px;height:12px;background:#d4d4d4;"></div>
<div style="left:36px;top:127px;width:1px;height:29px;background:#d4d4d4;"></div>
<div style="left:57px;top:96px;width:1px;height:12px;background:#d4d4d4;"></div>
<div style="left:57px;top:127px;width:1px;height:29px;background:#d4d4d4;"></div>
<div style="left:78px;top:96px;width:1px;height:12px;background:#d4d4d4;"></div>
<div style="left:78px;top:127px;width:1px;height:29px;background:#d4d4d4;"></div>
<div style="left:181px;top:96px;width:1px;height:12px;background:#d4d4d4;"></div>
<div style="left:181px;top:127px;width:1px;height:29px;background:#d4d4d4;"></div>
<div style="left:253px;top:96px;width:1px;height:12px;background:#d4d4d4;"></div>
<div style="left:253px;top:127px;width:1px;height:29px;background:#d4d4d4;"></div>
<div style="left:348px;top:96px;width:1px;height:12px;background:#d4d4d4;"></div>
<div style="left:348px;top:127px;width:1px;height:29px;background:#d4d4d4;"></div>
<div style="left:406px;top:96px;width:1px;height:12px;background:#d4d4d4;"></div>
<div style="left:406px;top:127px;width:1px;height:29px;background:#d4d4d4;"></div>
<div style="left:465px;top:96px;width:1px;height:12px;background:#d4d4d4;"></div>
<div style="left:465px;top:127px;width:1px;height:29px;background:#d4d4d4;"></div>
<div style="left:756px;top:96px;width:1px;height:12px;background:#d4d4d4;"></div>
<div style="left:756px;top:127px;width:1px;height:29px;background:#d4d4d4;"></div>
<div style="left:844px;top:96px;width:1px;height:12px;background:#d4d4d4;"></div>
<div style="left:844px;top:127px;width:1px;height:29px;background:#d4d4d4;"></div>
<div style="left:990px;top:96px;width:1px;height:12px;background:#d4d4d4;"></div>
<div style="left:990px;top:127px;width:1px;height:29px;background:#d4d4d4;"></div>
<div style="left:1078px;top:96px;width:1px;height:12px;background:#d4d4d4;"></div>
<div style="left:1078px;top:127px;width:1px;height:29px;background:#d4d4d4;"></div>
<div style="left:1150px;top:96px;width:1px;height:12px;background:#d4d4d4;"></div>
<div style="left:1150px;top:127px;width:1px;height:29px;background:#d4d4d4;"></div>
<div style="left:1223px;top:96px;width:1px;height:12px;background:#d4d4d4;"></div>
<div style="left:1223px;top:127px;width:1px;height:29px;background:#d4d4d4;"></div>
<div style="left:1311px;top:96px;width:1px;height:12px;background:#d4d4d4;"></div>
<div style="left:1311px;top:127px;width:1px;height:29px;background:#d4d4d4;"></div>
<div style="left:37px;top:96px;width:1301px;height:14px;border:1px solid #3c3c3c;border-left-width:2px;border-bottom-width:2px;border-right:0;"></div>
<svg style="left:7.6px;top:98.4px;" width="6.4" height="9.4" viewBox="0 0 6.4 9.4"><path d="M0.4 0.2 L6 4.7 L0.4 9.2 Z" fill="#111"/></svg>
<div style="left:22.7px;top:97.6px;width:10px;height:10px;background:#fff;border:1px solid #8a8a8a;border-right-color:#e8e8e8;border-bottom-color:#e8e8e8;box-shadow:inset 1px 1px 0 #555;"></div>
<span class="t v" style="top:96px;font-size:11.5px;line-height:14px;left:-221.81px;width:400px;text-align:right;color:#111;transform:scaleX(1.0108);transform-origin:100% 0;">180673</span>
<span class="t v" style="top:96px;font-size:11.5px;line-height:14px;left:-149.31px;width:400px;text-align:right;color:#111;">5</span>
<span class="t v" style="top:96px;font-size:11.5px;line-height:14px;left:-54.31px;width:400px;text-align:right;color:#111;transform:scaleX(1.0314);transform-origin:100% 0;">24/09/2025</span>
<span class="t v" style="top:96px;font-size:11.5px;line-height:14px;left:61.69px;width:400px;text-align:right;color:#111;">0</span>
<span class="t v" style="top:96px;font-size:11.5px;line-height:14px;left:441.29px;width:400px;text-align:right;color:#111;transform:scaleX(1.0194);transform-origin:100% 0;">198</span>
<span class="t v" style="top:96px;font-size:11.5px;line-height:14px;left:846.71px;color:#111;transform:scaleX(1.0263);transform-origin:0 0;">ROSSI SRL</span>
<div class="clip" style="left:992px;top:96px;width:83.6px;height:14px;overflow:hidden;">
<span class="t v" style="top:0px;font-size:11.5px;line-height:14px;left:1.31px;color:#111;">VIA DI BRAVETTA</span>
</div>
<span class="t v" style="top:96px;font-size:11.5px;line-height:14px;left:1080.31px;color:#111;transform:scaleX(0.9867);transform-origin:0 0;">ROMA</span>
<span class="t v" style="top:96px;font-size:11.5px;line-height:14px;left:1153.31px;color:#111;transform:scaleX(0.9698);transform-origin:0 0;">RM</span>
<span class="t v" style="top:96px;font-size:11.5px;line-height:14px;left:1226.31px;color:#111;transform:scaleX(0.9652);transform-origin:0 0;">DdT</span>
<div style="left:22.7px;top:129px;width:10px;height:10px;background:#fff;border:1px solid #8a8a8a;border-right-color:#e8e8e8;border-bottom-color:#e8e8e8;box-shadow:inset 1px 1px 0 #555;"></div>
<span class="t v" style="top:127px;font-size:11.5px;line-height:14px;left:-221.81px;width:400px;text-align:right;color:#111;transform:scaleX(1.0108);transform-origin:100% 0;">180671</span>
<span class="t v" style="top:127px;font-size:11.5px;line-height:14px;left:-149.31px;width:400px;text-align:right;color:#111;">3</span>
<span class="t v" style="top:127px;font-size:11.5px;line-height:14px;left:-54.31px;width:400px;text-align:right;color:#111;transform:scaleX(1.0314);transform-origin:100% 0;">23/09/2025</span>
<span class="t v" style="top:127px;font-size:11.5px;line-height:14px;left:61.69px;width:400px;text-align:right;color:#111;">0</span>
<span class="t v" style="top:127px;font-size:11.5px;line-height:14px;left:441.29px;width:400px;text-align:right;color:#111;transform:scaleX(1.0194);transform-origin:100% 0;">198</span>
<span class="t v" style="top:127px;font-size:11.5px;line-height:14px;left:846.71px;color:#111;transform:scaleX(1.0263);transform-origin:0 0;">ROSSI SRL</span>
<div class="clip" style="left:992px;top:127px;width:83.6px;height:14px;overflow:hidden;">
<span class="t v" style="top:0px;font-size:11.5px;line-height:14px;left:1.31px;color:#111;">VIA DI BRAVETTA</span>
</div>
<span class="t v" style="top:127px;font-size:11.5px;line-height:14px;left:1080.31px;color:#111;transform:scaleX(0.9867);transform-origin:0 0;">ROMA</span>
<span class="t v" style="top:127px;font-size:11.5px;line-height:14px;left:1153.31px;color:#111;transform:scaleX(0.9698);transform-origin:0 0;">RM</span>
<span class="t v" style="top:127px;font-size:11.5px;line-height:14px;left:1226.31px;color:#111;transform:scaleX(0.9652);transform-origin:0 0;">DdT</span>
<div style="left:22.7px;top:143px;width:10px;height:10px;background:#fff;border:1px solid #8a8a8a;border-right-color:#e8e8e8;border-bottom-color:#e8e8e8;box-shadow:inset 1px 1px 0 #555;"></div>
<span class="t v" style="top:141px;font-size:11.5px;line-height:14px;left:-221.81px;width:400px;text-align:right;color:#111;transform:scaleX(1.0108);transform-origin:100% 0;">180669</span>
<span class="t v" style="top:141px;font-size:11.5px;line-height:14px;left:-149.31px;width:400px;text-align:right;color:#111;">2</span>
<span class="t v" style="top:141px;font-size:11.5px;line-height:14px;left:-54.31px;width:400px;text-align:right;color:#111;transform:scaleX(1.0314);transform-origin:100% 0;">23/09/2025</span>
<span class="t v" style="top:141px;font-size:11.5px;line-height:14px;left:61.69px;width:400px;text-align:right;color:#111;">0</span>
<span class="t v" style="top:141px;font-size:11.5px;line-height:14px;left:441.29px;width:400px;text-align:right;color:#111;transform:scaleX(1.0102);transform-origin:100% 0;">2233</span>
<span class="t v" style="top:141px;font-size:11.5px;line-height:14px;left:846.71px;color:#111;transform:scaleX(1.0146);transform-origin:0 0;">BOCCALON PAOLA</span>
<div class="clip" style="left:992px;top:141px;width:83.6px;height:14px;overflow:hidden;">
<span class="t v" style="top:0px;font-size:11.5px;line-height:14px;left:1.31px;color:#111;">VIA RUI DE CONTI</span>
</div>
<span class="t v" style="top:141px;font-size:11.5px;line-height:14px;left:1080.31px;color:#111;transform:scaleX(1.0197);transform-origin:0 0;">BUDOIA</span>
<span class="t v" style="top:141px;font-size:11.5px;line-height:14px;left:1153.31px;color:#111;transform:scaleX(1.1179);transform-origin:0 0;">PN</span>
<span class="t v" style="top:141px;font-size:11.5px;line-height:14px;left:1226.31px;color:#111;transform:scaleX(0.9652);transform-origin:0 0;">DdT</span>
<div style="left:1px;top:156px;width:1337px;height:142px;background:#d2d2d2;"></div>
<div style="left:1px;top:297px;width:1337px;height:1px;background:#a7afbf;"></div>
<div style="left:1px;top:298px;width:1337px;height:13px;background:#b8cce4;"></div>
<div style="left:1px;top:311px;width:1337px;height:16px;background:#ececf3;"></div>
<div style="left:36px;top:298px;width:1px;height:13px;background:#a9bdd8;"></div>
<div style="left:36px;top:311px;width:1px;height:16px;background:#c9c9d2;"></div>
<div style="left:57px;top:298px;width:1px;height:13px;background:#a9bdd8;"></div>
<div style="left:57px;top:311px;width:1px;height:16px;background:#c9c9d2;"></div>
<div style="left:78px;top:298px;width:1px;height:13px;background:#a9bdd8;"></div>
<div style="left:78px;top:311px;width:1px;height:16px;background:#c9c9d2;"></div>
<div style="left:181px;top:298px;width:1px;height:13px;background:#a9bdd8;"></div>
<div style="left:181px;top:311px;width:1px;height:16px;background:#c9c9d2;"></div>
<div style="left:253px;top:298px;width:1px;height:13px;background:#a9bdd8;"></div>
<div style="left:253px;top:311px;width:1px;height:16px;background:#c9c9d2;"></div>
<div style="left:348px;top:298px;width:1px;height:13px;background:#a9bdd8;"></div>
<div style="left:348px;top:311px;width:1px;height:16px;background:#c9c9d2;"></div>
<div style="left:406px;top:298px;width:1px;height:13px;background:#a9bdd8;"></div>
<div style="left:406px;top:311px;width:1px;height:16px;background:#c9c9d2;"></div>
<div style="left:465px;top:298px;width:1px;height:13px;background:#a9bdd8;"></div>
<div style="left:465px;top:311px;width:1px;height:16px;background:#c9c9d2;"></div>
<div style="left:756px;top:298px;width:1px;height:13px;background:#a9bdd8;"></div>
<div style="left:756px;top:311px;width:1px;height:16px;background:#c9c9d2;"></div>
<div style="left:844px;top:298px;width:1px;height:13px;background:#a9bdd8;"></div>
<div style="left:844px;top:311px;width:1px;height:16px;background:#c9c9d2;"></div>
<div style="left:990px;top:298px;width:1px;height:13px;background:#a9bdd8;"></div>
<div style="left:990px;top:311px;width:1px;height:16px;background:#c9c9d2;"></div>
<div style="left:1078px;top:298px;width:1px;height:13px;background:#a9bdd8;"></div>
<div style="left:1078px;top:311px;width:1px;height:16px;background:#c9c9d2;"></div>
<div style="left:1150px;top:298px;width:1px;height:13px;background:#a9bdd8;"></div>
<div style="left:1150px;top:311px;width:1px;height:16px;background:#c9c9d2;"></div>
<div style="left:1223px;top:298px;width:1px;height:13px;background:#a9bdd8;"></div>
<div style="left:1223px;top:311px;width:1px;height:16px;background:#c9c9d2;"></div>
<div style="left:1311px;top:298px;width:1px;height:13px;background:#a9bdd8;"></div>
<div style="left:1311px;top:311px;width:1px;height:16px;background:#c9c9d2;"></div>
<div style="left:254px;top:298px;width:1px;height:29px;background:#333;"></div>
<span class="t v" style="top:312px;font-size:11px;line-height:13px;left:4.34px;color:#000;font-weight:bold;transform:scaleX(1.0754);transform-origin:0 0;">Tot:</span>
<div style="left:18px;top:334px;width:690px;height:2px;background:#777;"></div>
</section>
<div style="left:189px;top:599px;width:1341px;height:9px;background:#f0f0f0;"></div>
<section class="detail" style="left:192px;top:609px;width:1338px;height:274px;">
<div style="left:0px;top:-1px;width:1338px;height:21px;background:linear-gradient(#fff,#ececec);border:1px solid #c9c9c9;"></div>
<span class="t v" style="top:3px;font-size:11.5px;line-height:14px;left:3.31px;color:#111;transform:scaleX(1.0084);transform-origin:0 0;">Dettaglio righe documento OdS - 5 del 24/09/2025</span>
<div style="left:0px;top:19px;width:1338px;height:255px;background:#f0f0f0;border:1px solid #cdcdcd;"></div>
<div style="left:4px;top:24px;width:1328px;height:20px;background:#e6e6e6;border:1px solid #b1b8c9;"></div>
<svg style="left:1096px;top:27px;" width="15" height="15" viewBox="0 0 15 15"><path d="M2 7 C2 3.6 5 1.8 8 2.4 C9.6 2.7 10.6 3.4 11.4 4.4" fill="none" stroke="#63ad86" stroke-width="2.4"/><path d="M9 6.2 L14 6.6 L13.6 1.4 Z" fill="#63ad86"/><path d="M13 8.4 C13 11.8 10 13.6 7 13 C5.4 12.7 4.4 12 3.6 11" fill="none" stroke="#63ad86" stroke-width="2.4"/><path d="M6 9.2 L1 8.8 L1.4 14 Z" fill="#63ad86"/></svg>
<svg style="left:1117px;top:26.8px;" width="16" height="15.4" viewBox="0 0 15.4 15.4"><rect x="7" y="2.4" width="8" height="10.6" fill="#fff" stroke="#1f7145" stroke-width="0.9"/><path d="M9.5 2.4 V13 M12.2 2.4 V13 M7 5 H15 M7 7.7 H15 M7 10.4 H15" stroke="#1f7145" stroke-width="0.8"/><path d="M0.3 1.8 L9.4 0.3 V15 L0.3 13.5 Z" fill="#1f7145"/><path d="M2.6 4.6 L7 10.9 M7 4.6 L2.6 10.9" stroke="#fff" stroke-width="1.6"/></svg>
<svg style="left:1139px;top:26.8px;" width="15.4" height="15.4" viewBox="0 0 15.2 15.2"><rect x="0.7" y="0.9" width="13.8" height="13.4" fill="#f4f4f4" stroke="#7a7a7a" stroke-width="1.2"/><path d="M0.7 3.4 H14.5" stroke="#7a7a7a" stroke-width="1"/><path d="M3.2 5.4 V7.4 M3.2 9 V11" stroke="#888" stroke-width="1"/><path d="M5.6 10.8 H8.4 V6.4 H11.6" fill="none" stroke="#2d6cc0" stroke-width="1.3"/><path d="M10.4 4.6 L12.8 6.4 L10.4 8.2 Z M7 9 L5 10.8 L7 12.6 Z" fill="#2d6cc0"/></svg>
<svg style="left:1170px;top:26.8px;" width="15.4" height="15.8" viewBox="0 0 15.4 15.8"><circle cx="7" cy="6.4" r="4.6" fill="#f6f6f6" stroke="#777" stroke-width="1.7"/><path d="M10 10 L14 14.4" stroke="#777" stroke-width="2.3"/><path d="M10.6 1.2 H14.6" stroke="#e0402c" stroke-width="1.4"/><path d="M2.8 10.4 V15 M0.5 12.7 H5.1" stroke="#3a9a5c" stroke-width="1.6"/></svg>
<svg style="left:1204px;top:27.2px;" width="15" height="15" viewBox="0 0 15 15"><rect x="0.6" y="1.6" width="10.4" height="10.4" fill="#f2f2f2" stroke="#7c7c7c" stroke-width="1"/><path d="M0.6 4.4 H11 M0.6 7.2 H11 M0.6 9.8 H11 M4.2 1.6 V12 M7.6 1.6 V12" stroke="#7c7c7c" stroke-width="0.9"/><rect x="0.6" y="1.2" width="10.4" height="1.8" fill="#6a6a6a"/><path d="M8 3 V14.6" stroke="#2f6fc0" stroke-width="2.6"/><path d="M6.6 9 H9.4" stroke="#fff" stroke-width="0.8"/><path d="M10.6 3 L12.2 7 L13.8 3" fill="none" stroke="#2f6fc0" stroke-width="1.8"/><path d="M12.2 6.4 V14.6" stroke="#2f6fc0" stroke-width="2.2"/></svg>
<div style="left:1161px;top:27px;width:1px;height:14px;background:#d0d0d0;"></div>
<div style="left:1237px;top:27px;width:1px;height:14px;background:#d0d0d0;"></div>
<svg style="left:1191.2px;top:33.4px;" width="5.6" height="3" viewBox="0 0 7 3.6"><path d="M0 0 H7 L3.5 3.6 Z" fill="#6d6d6d"/></svg>
<svg style="left:1225.2px;top:33.4px;" width="5.6" height="3" viewBox="0 0 7 3.6"><path d="M0 0 H7 L3.5 3.6 Z" fill="#6d6d6d"/></svg>
<span class="t s" style="top:28px;font-size:10.5px;line-height:12px;left:1243.63px;color:#333;">Righe: 1</span>
<div style="left:4px;top:44px;width:1328px;height:44px;background:#e6e6e6;border-left:1px solid #b1b8c9;border-right:1px solid #b1b8c9;"></div>
<div style="left:21px;top:44px;width:1px;height:43px;background:#b1b8c9;"></div>
<div style="left:43px;top:44px;width:1px;height:43px;background:#b1b8c9;"></div>
<div style="left:130px;top:60px;width:1px;height:27px;background:#b1b8c9;"></div>
<div style="left:203px;top:60px;width:1px;height:27px;background:#b1b8c9;"></div>
<div style="left:298px;top:60px;width:1px;height:27px;background:#b1b8c9;"></div>
<div style="left:385px;top:60px;width:1px;height:27px;background:#b1b8c9;"></div>
<div style="left:935px;top:44px;width:1px;height:43px;background:#b1b8c9;"></div>
<div style="left:1022px;top:44px;width:1px;height:43px;background:#b1b8c9;"></div>
<div style="left:1132px;top:44px;width:1px;height:43px;background:#b1b8c9;"></div>
<div style="left:1219px;top:44px;width:1px;height:43px;background:#b1b8c9;"></div>
<div style="left:1329px;top:44px;width:1px;height:43px;background:#b1b8c9;"></div>
<div style="left:43px;top:59px;width:693px;height:1px;background:#b1b8c9;"></div>
<div style="left:4px;top:87px;width:1328px;height:1px;background:#b1b8c9;"></div>
<svg style="left:26px;top:60.4px;" width="13.4" height="13" viewBox="0 0 14 14"><rect x="0.8" y="1.8" width="12.4" height="10.4" rx="1.2" fill="#f6f6f6" stroke="#777" stroke-width="1.1"/><path d="M3.2 0.4 V2.6 M7 0.4 V2.6 M10.8 0.4 V2.6" stroke="#777" stroke-width="1"/><path d="M3 5 H11 M3 7.2 H11 M3 9.4 H8" stroke="#888" stroke-width="1"/><path d="M9.6 12.2 L13.2 9 V12.2 Z" fill="#777"/></svg>
<span class="t v" style="top:46px;font-size:9.5px;line-height:11px;left:-11.96px;width:600px;text-align:center;color:#1f1f1f;letter-spacing:0.49px;">Ordine Cliente</span>
<span class="t v" style="top:61px;font-size:9.5px;line-height:11px;left:47.43px;color:#1f1f1f;letter-spacing:0.57px;text-decoration:underline;">Rif. Registr...</span>
<div style="left:118px;top:63px;width:1px;height:23px;background:#adadad;"></div>
<svg style="left:121.4px;top:71.7px;" width="5.2" height="2.8" viewBox="0 0 7 3.6"><path d="M0 0 H7 L3.5 3.6 Z" fill="#6d6d6d"/></svg>
<span class="t v" style="top:68px;font-size:10.5px;line-height:12px;left:-139.2px;width:600px;text-align:center;color:#1f1f1f;transform:scaleX(1.0274);transform-origin:50% 0;">Numero</span>
<div style="left:191px;top:63px;width:1px;height:23px;background:#adadad;"></div>
<svg style="left:194px;top:71.7px;" width="5.2" height="2.8" viewBox="0 0 7 3.6"><path d="M0 0 H7 L3.5 3.6 Z" fill="#6d6d6d"/></svg>
<span class="t v" style="top:68px;font-size:10.5px;line-height:12px;left:-57.2px;width:600px;text-align:center;color:#1f1f1f;transform:scaleX(1.0272);transform-origin:50% 0;">Data</span>
<div style="left:286px;top:63px;width:1px;height:23px;background:#adadad;"></div>
<svg style="left:288.8px;top:71.7px;" width="5.2" height="2.8" viewBox="0 0 7 3.6"><path d="M0 0 H7 L3.5 3.6 Z" fill="#6d6d6d"/></svg>
<span class="t v" style="top:68px;font-size:10.5px;line-height:12px;left:35.4px;width:600px;text-align:center;color:#1f1f1f;transform:scaleX(1.0244);transform-origin:50% 0;">Cliente</span>
<div style="left:373px;top:63px;width:1px;height:23px;background:#adadad;"></div>
<svg style="left:376.2px;top:71.7px;" width="5.2" height="2.8" viewBox="0 0 7 3.6"><path d="M0 0 H7 L3.5 3.6 Z" fill="#6d6d6d"/></svg>
<span class="t v" style="top:68px;font-size:10.5px;line-height:12px;left:411.57px;color:#1f1f1f;">Ragione sociale</span>
<span class="t v" style="top:60px;font-size:10.5px;line-height:12px;left:518.8px;width:600px;text-align:center;color:#1f1f1f;transform:scaleX(1.0207);transform-origin:50% 0;">Descrizione</span>
<div style="left:923px;top:48px;width:1px;height:37px;background:#adadad;"></div>
<svg style="left:926px;top:64.7px;" width="5.2" height="2.8" viewBox="0 0 7 3.6"><path d="M0 0 H7 L3.5 3.6 Z" fill="#6d6d6d"/></svg>
<span class="t v" style="top:60px;font-size:10.5px;line-height:12px;left:673px;width:600px;text-align:center;color:#1f1f1f;">Magazzino</span>
<div style="left:1010px;top:48px;width:1px;height:37px;background:#adadad;"></div>
<svg style="left:1013.4px;top:64.7px;" width="5.2" height="2.8" viewBox="0 0 7 3.6"><path d="M0 0 H7 L3.5 3.6 Z" fill="#6d6d6d"/></svg>
<span class="t v" style="top:60px;font-size:10.5px;line-height:12px;left:771px;width:600px;text-align:center;color:#1f1f1f;transform:scaleX(1.0616);transform-origin:50% 0;">Area</span>
<div style="left:1120px;top:48px;width:1px;height:37px;background:#adadad;"></div>
<svg style="left:1123px;top:64.7px;" width="5.2" height="2.8" viewBox="0 0 7 3.6"><path d="M0 0 H7 L3.5 3.6 Z" fill="#6d6d6d"/></svg>
<span class="t v" style="top:60px;font-size:10.5px;line-height:12px;left:869.4px;width:600px;text-align:center;color:#1f1f1f;transform:scaleX(0.9931);transform-origin:50% 0;">UdM</span>
<div style="left:1207px;top:48px;width:1px;height:37px;background:#adadad;"></div>
<svg style="left:1210.4px;top:64.7px;" width="5.2" height="2.8" viewBox="0 0 7 3.6"><path d="M0 0 H7 L3.5 3.6 Z" fill="#6d6d6d"/></svg>
<span class="t v" style="top:54px;font-size:10.5px;line-height:12px;left:967.8px;width:600px;text-align:center;color:#1f1f1f;transform:scaleX(0.9956);transform-origin:50% 0;">Quantità in</span>
<span class="t v" style="top:66px;font-size:10.5px;line-height:12px;left:967.8px;width:600px;text-align:center;color:#1f1f1f;transform:scaleX(1.0299);transform-origin:50% 0;">ordine</span>
<div style="left:1317px;top:48px;width:1px;height:37px;background:#adadad;"></div>
<svg style="left:1320.2px;top:64.7px;" width="5.2" height="2.8" viewBox="0 0 7 3.6"><path d="M0 0 H7 L3.5 3.6 Z" fill="#6d6d6d"/></svg>
<div style="left:4px;top:88px;width:1328px;height:15px;background:#e4edf9;border-left:1px solid #b1b8c9;border-right:1px solid #b1b8c9;border-bottom:1px solid #b1b8c9;"></div>
<div style="left:5px;top:88px;width:16px;height:14px;background:#fff;"></div>
<svg style="left:8.8px;top:90.8px;" width="8.4" height="8.4" viewBox="0 0 11 11"><path d="M0.5 0.8 H10.5 L6.7 5 V10.6 L4.3 9 V5 Z" fill="#111"/></svg>
<div style="left:21px;top:88px;width:1px;height:14px;background:#bcc4d4;"></div>
<div style="left:43px;top:88px;width:1px;height:14px;background:#bcc4d4;"></div>
<div style="left:130px;top:88px;width:1px;height:14px;background:#bcc4d4;"></div>
<div style="left:203px;top:88px;width:1px;height:14px;background:#bcc4d4;"></div>
<div style="left:298px;top:88px;width:1px;height:14px;background:#bcc4d4;"></div>
<div style="left:385px;top:88px;width:1px;height:14px;background:#bcc4d4;"></div>
<div style="left:935px;top:88px;width:1px;height:14px;background:#bcc4d4;"></div>
<div style="left:1022px;top:88px;width:1px;height:14px;background:#bcc4d4;"></div>
<div style="left:1132px;top:88px;width:1px;height:14px;background:#bcc4d4;"></div>
<div style="left:1219px;top:88px;width:1px;height:14px;background:#bcc4d4;"></div>
<div style="left:1329px;top:88px;width:1px;height:14px;background:#bcc4d4;"></div>
<div style="left:4px;top:103px;width:1328px;height:15px;background:#fff;border-bottom:1px solid #d4d4d4;"></div>
<div style="left:21px;top:103px;width:1px;height:14px;background:#d4d4d4;"></div>
<div style="left:43px;top:103px;width:1px;height:14px;background:#d4d4d4;"></div>
<div style="left:130px;top:103px;width:1px;height:14px;background:#d4d4d4;"></div>
<div style="left:203px;top:103px;width:1px;height:14px;background:#d4d4d4;"></div>
<div style="left:298px;top:103px;width:1px;height:14px;background:#d4d4d4;"></div>
<div style="left:385px;top:103px;width:1px;height:14px;background:#d4d4d4;"></div>
<div style="left:935px;top:103px;width:1px;height:14px;background:#d4d4d4;"></div>
<div style="left:1022px;top:103px;width:1px;height:14px;background:#d4d4d4;"></div>
<div style="left:1132px;top:103px;width:1px;height:14px;background:#d4d4d4;"></div>
<div style="left:1219px;top:103px;width:1px;height:14px;background:#d4d4d4;"></div>
<div style="left:1329px;top:103px;width:1px;height:14px;background:#d4d4d4;"></div>
<a class="t v" style="top:104px;font-size:9.5px;line-height:11px;left:45.73px;color:#1a1ae0;letter-spacing:0.69px;text-decoration:underline;">2025.1.3</a>
<span class="t v" style="top:104px;font-size:11.5px;line-height:14px;left:-199.71px;width:400px;text-align:right;color:#111;">3</span>
<span class="t v" style="top:104px;font-size:11.5px;line-height:14px;left:-104.71px;width:400px;text-align:right;color:#111;transform:scaleX(1.0314);transform-origin:100% 0;">23/09/2025</span>
<span class="t v" style="top:104px;font-size:11.5px;line-height:14px;left:-17.31px;width:400px;text-align:right;color:#111;transform:scaleX(1.0194);transform-origin:100% 0;">198</span>
<span class="t v" style="top:104px;font-size:11.5px;line-height:14px;left:387.81px;color:#111;transform:scaleX(1.0329);transform-origin:0 0;">ROSSI SRL</span>
<span class="t v" style="top:104px;font-size:11.5px;line-height:14px;left:717.71px;color:#111;transform:scaleX(1.0355);transform-origin:0 0;">ARTICOLO 1</span>
<span class="t v" style="top:104px;font-size:11.5px;line-height:14px;left:938.01px;color:#111;">01</span>
<span class="t v" style="top:104px;font-size:11.5px;line-height:14px;left:1134.81px;color:#111;">PZ</span>
<span class="t v" style="top:104px;font-size:11.5px;line-height:14px;left:922.99px;width:400px;text-align:right;color:#111;transform:scaleX(1.0380);transform-origin:100% 0;">50,000</span>
<div style="left:4px;top:118px;width:1328px;height:132px;background:#d2d2d2;"></div>
<div style="left:4px;top:250px;width:1328px;height:17px;background:#f0f0f0;border:1px solid #b1b8c9;border-top:0;"></div>
<div style="left:21px;top:258px;width:792px;height:2px;background:#777;"></div>
</section>
<footer class="statusbar" style="left:0px;top:889px;width:1544px;height:35px;">
<span class="t v" style="top:20px;font-size:11px;line-height:13px;left:1123.64px;color:#3c3c3c;transform:scaleX(1.0412);transform-origin:0 0;">EM110A</span>
<span class="t v" style="top:20px;font-size:11px;line-height:13px;left:1221.14px;color:#3c3c3c;transform:scaleX(1.0420);transform-origin:0 0;">ADMIN</span>
<span class="t v" style="top:20px;font-size:11px;line-height:13px;left:1337.14px;color:#3c3c3c;transform:scaleX(1.0942);transform-origin:0 0;">XS/W1/W1</span>
<svg style="left:1457.4px;top:18.6px;" width="14.6" height="14" viewBox="0 0 14.6 14"><path d="M1 2.4 C1 0.6 10 0.6 10 2.4 V11.4 C10 13.2 1 13.2 1 11.4 Z" fill="#f5b142"/><ellipse cx="5.5" cy="2.5" rx="4.5" ry="1.5" fill="#f9cf85"/><path d="M7.2 10.6 L9.4 12.8 L13.6 8.2" fill="none" stroke="#1e9a2e" stroke-width="1.9"/></svg>
<svg style="left:1477.2px;top:17.6px;" width="16" height="15.4" viewBox="0 0 16 15.4"><rect x="1" y="0.6" width="14" height="10.2" rx="1" fill="#fbb445" stroke="#3f78be" stroke-width="1"/><path d="M6.6 11 H9.6 V12.4 H6.6 Z" fill="#3f78be"/><path d="M1 12.2 H15" stroke="#1b2a4a" stroke-width="0.9"/><path d="M2.4 14.3 H14" stroke="#fbb445" stroke-width="1.3" stroke-dasharray="2.6 1.2"/></svg>
</footer>
<menu class="menu" style="left:658px;top:99px;width:271px;height:825px;">
<div style="left:0px;top:0px;width:270px;height:825px;background:#f8f8f8;border:1px solid #fcfcfc;box-shadow:0 0 0 1px rgba(0,0,0,0.035);"></div>
<svg style="left:7.4px;top:4.4px;" width="16" height="16" viewBox="0 0 16 16"><path d="M0.6 1.2 H7.399999999999999 L10.799999999999999 4.6 V13.6 H0.6 Z" fill="#fdfdfd" stroke="#4a4a4a" stroke-width="1.1"/><path d="M7.399999999999999 1.2 V4.6 H10.799999999999999" fill="none" stroke="#4a4a4a" stroke-width="0.9900000000000001"/><rect x="6.6" y="9" width="8.2" height="6" fill="#fdfdfd" stroke="#5a5a5a" stroke-width="0.9"/><path d="M8.2 11 H9.2 M10.2 11 H13.2 M8.2 13 H9.2 M10.2 13 H13.2" stroke="#8a8a8a" stroke-width="0.8"/></svg>
<span class="t s" style="top:6px;font-size:10.5px;line-height:12px;left:34.03px;color:#161616;transform:scaleX(1.0768);transform-origin:0 0;">Dettaglio</span>
<svg style="left:7.4px;top:24.4px;" width="16" height="16" viewBox="0 0 16 16"><path d="M0.6 1.2 H7.6 L11.0 4.6 V13.6 H0.6 Z" fill="#fdfdfd" stroke="#4a4a4a" stroke-width="1.1"/><path d="M7.6 1.2 V4.6 H11.0" fill="none" stroke="#4a4a4a" stroke-width="0.9900000000000001"/><path d="M7.4 8.6 L14 14.6 M14 8.6 L7.4 14.6" stroke="#d8421f" stroke-width="2.2"/></svg>
<span class="t s" style="top:26px;font-size:10.5px;line-height:12px;left:34.03px;color:#161616;transform:scaleX(1.0522);transform-origin:0 0;">Elimina</span>
<svg style="left:7.4px;top:45.4px;" width="16" height="16" viewBox="0 0 16 16"><path d="M2.4 1.2 H8.6 L12.0 4.6 V13.799999999999999 H2.4 Z" fill="#f6f6f6" stroke="#cfcfcf" stroke-width="1.1"/><path d="M8.6 1.2 V4.6 H12.0" fill="none" stroke="#cfcfcf" stroke-width="0.9900000000000001"/><path d="M3.4 4.4 H8 M3.4 6.6 H7" stroke="#d4d4d4" stroke-width="1.2"/><path d="M6 12.6 L12.4 6.2 L14.2 8 L7.8 14.4 L5.4 15 Z" fill="#e2e2e2" stroke="#cfcfcf" stroke-width="0.8"/></svg>
<span class="t s" style="top:47px;font-size:10.5px;line-height:12px;left:34.03px;color:#a9a9a9;transform:scaleX(1.0404);transform-origin:0 0;">Porta in stato 'Rilasciato'</span>
<svg style="left:7.4px;top:65.4px;" width="16" height="16" viewBox="0 0 16 16"><path d="M3 1.2 H9.0 L12.4 4.6 V13.799999999999999 H3 Z" fill="#fff" stroke="#333" stroke-width="1.1"/><path d="M9.0 1.2 V4.6 H12.4" fill="none" stroke="#333" stroke-width="0.9900000000000001"/><path d="M0.8 5.4 H5.4 V3.2 L9.4 6.4 L5.4 9.6 V7.4 H0.8 Z" fill="#4fa98a"/><path d="M5.4 12.8 L12.2 5.8 L14.8 8.2 L8 15 L4.6 15.8 Z" fill="#3f7fd0" stroke="#1c3c78" stroke-width="0.9"/></svg>
<span class="t s" style="top:67px;font-size:10.5px;line-height:12px;left:34.03px;color:#161616;transform:scaleX(1.0472);transform-origin:0 0;">Porta in stato 'In spedizione'</span>
<svg style="left:7.4px;top:85.4px;" width="16" height="16" viewBox="0 0 16 16"><rect x="0.6" y="1.2" width="6.8" height="6.6" fill="#ececec" stroke="#8a8a8a" stroke-width="1.1"/><rect x="2.5" y="3.5" width="3.2" height="3.2" fill="#e3a338" stroke="#b57614" stroke-width="0.6"/><rect x="8.4" y="1.2" width="6.8" height="6.6" fill="#ececec" stroke="#8a8a8a" stroke-width="1.1"/><rect x="10.3" y="3.5" width="3.2" height="3.2" fill="#e3a338" stroke="#b57614" stroke-width="0.6"/><rect x="0.6" y="8.6" width="6.8" height="6.6" fill="#ececec" stroke="#8a8a8a" stroke-width="1.1"/><rect x="2.5" y="10.899999999999999" width="3.2" height="3.2" fill="#e3a338" stroke="#b57614" stroke-width="0.6"/><rect x="8.4" y="8.6" width="6.8" height="6.6" fill="#ececec" stroke="#8a8a8a" stroke-width="1.1"/><rect x="10.3" y="10.899999999999999" width="3.2" height="3.2" fill="#e3a338" stroke="#b57614" stroke-width="0.6"/></svg>
<span class="t s" style="top:87px;font-size:10.5px;line-height:12px;left:34.03px;color:#161616;transform:scaleX(1.0634);transform-origin:0 0;">Interroga packing list</span>
<svg style="left:7.4px;top:106.4px;" width="16" height="16" viewBox="0 0 16 16"><rect x="0.8" y="2.6" width="9" height="6.4" fill="#ecc685"/><path d="M0.8 9.4 H10.2 V4.6 H13.2 L15.2 7.4 V10.8 H0.8 Z" fill="#4a86d8"/><path d="M11.4 5.8 H12.8 L14 7.6 H11.4 Z" fill="#fff"/><circle cx="4" cy="11.6" r="1.5" fill="#333"/><circle cx="12.4" cy="11.6" r="1.5" fill="#333"/></svg>
<span class="t s" style="top:108px;font-size:10.5px;line-height:12px;left:34.03px;color:#161616;transform:scaleX(1.0768);transform-origin:0 0;">Dati logistici</span>
<svg style="left:7.4px;top:126.4px;" width="16" height="16" viewBox="0 0 16 16"><rect x="1.4" y="1.4" width="11.6" height="13" rx="1" fill="#f1f1f1" stroke="#d2d2d2" stroke-width="1.2"/><rect x="4.6" y="3.2" width="6.6" height="7.2" fill="#fafafa" stroke="#d6d6d6" stroke-width="0.9"/><path d="M6 5 H7 M8 5 H10 M6 6.8 H7 M8 6.8 H10 M6 8.6 H7 M8 8.6 H10" stroke="#d6d6d6" stroke-width="0.9"/><path d="M3.2 1.4 V14.4" stroke="#d6d6d6" stroke-width="1"/></svg>
<span class="t s" style="top:128px;font-size:10.5px;line-height:12px;left:34.03px;color:#a9a9a9;transform:scaleX(1.0582);transform-origin:0 0;">Annotazioni e allegati</span>
<svg style="left:7.4px;top:146.4px;" width="16" height="16" viewBox="0 0 16 16"><path d="M0.4 0.8 H13.4 V13.4 H4.6 L0.4 9.4 Z" fill="#f0cc7a"/><path d="M0.4 9.4 H4.6 V13.4 Z" fill="#fff8e6"/><path d="M5.6 12.4 L12.6 4.6 L15.4 7 L8.4 14.8 L4.4 15.6 Z" fill="#3f7fd0" stroke="#15305e" stroke-width="1.1"/></svg>
<span class="t s" style="top:148px;font-size:10.5px;line-height:12px;left:34.03px;color:#161616;transform:scaleX(1.0871);transform-origin:0 0;">Commento al documento</span>
<svg style="left:7.4px;top:166.4px;" width="16" height="16" viewBox="0 0 16 16"><path d="M1.4 6 L7.6 1.2 L13.8 6 V12.6 H1.4 Z" fill="#f4f4f4" stroke="#4a4a4a" stroke-width="1.2"/><path d="M1.8 6.4 L7.6 10 L13.4 6.4" fill="none" stroke="#555" stroke-width="1"/><circle cx="12" cy="9.4" r="2.4" fill="#dd3b1f"/><path d="M8.4 15.6 C8.4 11.6 15.6 11.6 15.6 15.6 Z" fill="#dd3b1f"/><path d="M0.2 12.2 H4.4 V10.2 L8 13.3 L4.4 16.4 V14.4 H0.2 Z" fill="#2f6fc8"/></svg>
<span class="t s" style="top:168px;font-size:10.5px;line-height:12px;left:34.03px;color:#161616;transform:scaleX(1.1028);transform-origin:0 0;">Notifica documento</span>
<div style="left:8px;top:188px;width:254px;height:1px;background:#d9d9d9;"></div>
<svg style="left:7.4px;top:195.4px;" width="16" height="16" viewBox="0 0 16 16"><rect x="5.2" y="1.2" width="9" height="14" rx="1" fill="#fafafa" stroke="#cfcfcf" stroke-width="1.3"/><rect x="7" y="3" width="5.6" height="9" fill="#e6e6e6"/><path d="M6 13.6 H13.6" stroke="#cfcfcf" stroke-width="1.4"/><path d="M0.4 2.6 H3.6 M2.4 0.6 L4.8 2.8 L2.4 5" fill="none" stroke="#cfcfcf" stroke-width="1.5"/></svg>
<span class="t s" style="top:197px;font-size:10.5px;line-height:12px;left:34.03px;color:#a9a9a9;transform:scaleX(1.0260);transform-origin:0 0;">Acquisisci prelievi per OdS selezionati</span>
<svg style="left:7.4px;top:215.4px;" width="16" height="16" viewBox="0 0 16 16"><rect x="5.2" y="1.2" width="9" height="14" rx="1" fill="#fafafa" stroke="#2b2b2b" stroke-width="1.3"/><rect x="7" y="3" width="5.6" height="9" fill="#9a9a9a"/><path d="M6 13.6 H13.6" stroke="#2b2b2b" stroke-width="1.4"/><path d="M0.4 2.6 H3.6 M2.4 0.6 L4.8 2.8 L2.4 5" fill="none" stroke="#2f6fc8" stroke-width="1.5"/></svg>
<span class="t s" style="top:217px;font-size:10.5px;line-height:12px;left:34.03px;color:#161616;transform:scaleX(1.0721);transform-origin:0 0;">Acquisisci tutti i prelievi</span>
<div style="left:8px;top:237px;width:254px;height:1px;background:#d9d9d9;"></div>
<svg style="left:7.4px;top:243.4px;" width="16" height="16" viewBox="0 0 16 16"><path d="M3.6 12 V3.2 H8.4 L10.4 5" fill="none" stroke="#cdcdcd" stroke-width="1.1"/><path d="M6.4 5.2 H11.4 L14.0 7.800000000000001 V14.8 H6.4 Z" fill="#fdfdfd" stroke="#cdcdcd" stroke-width="1.1"/><path d="M11.4 5.2 V7.800000000000001 H14.0" fill="none" stroke="#cdcdcd" stroke-width="0.9900000000000001"/><path d="M2.6 0.2 V5 M0.2 2.6 H5" stroke="#cfcfcf" stroke-width="1.5"/></svg>
<span class="t s" style="top:245px;font-size:10.5px;line-height:12px;left:34.03px;color:#a9a9a9;transform:scaleX(1.0316);transform-origin:0 0;">Crea DdT di vendita</span>
<svg style="left:7.4px;top:264.4px;" width="16" height="16" viewBox="0 0 16 16"><path d="M3.6 12 V3.2 H8.4 L10.4 5" fill="none" stroke="#cdcdcd" stroke-width="1.1"/><path d="M6.4 5.2 H11.4 L14.0 7.800000000000001 V14.8 H6.4 Z" fill="#fdfdfd" stroke="#cdcdcd" stroke-width="1.1"/><path d="M11.4 5.2 V7.800000000000001 H14.0" fill="none" stroke="#cdcdcd" stroke-width="0.9900000000000001"/><path d="M2.6 0.2 V5 M0.2 2.6 H5" stroke="#cfcfcf" stroke-width="1.5"/></svg>
<span class="t s" style="top:266px;font-size:10.5px;line-height:12px;left:34.03px;color:#a9a9a9;transform:scaleX(1.0447);transform-origin:0 0;">Crea fattura di vendita</span>
<div style="left:8px;top:286px;width:254px;height:1px;background:#d9d9d9;"></div>
<svg style="left:7.4px;top:292.4px;" width="16" height="16" viewBox="0 0 16 16"><rect x="1" y="3.6" width="13.4" height="7.6" rx="1.6" fill="#2f64b0" stroke="#12284e" stroke-width="1.4"/><path d="M3.4 6.2 L5 9 L6.6 5.6 M8 7.4 H9 M10 6 H12 V9 H10 Z" fill="none" stroke="#dfe9f8" stroke-width="1"/></svg>
<span class="t s" style="top:294px;font-size:10.5px;line-height:12px;left:34.03px;color:#161616;transform:scaleX(1.0517);transform-origin:0 0;">Legami</span>
<div style="left:8px;top:314px;width:254px;height:1px;background:#d9d9d9;"></div>
<svg style="left:7.4px;top:321.4px;" width="16" height="16" viewBox="0 0 16 16"><path d="M2.6 0.4 V5 M0.3 2.7 H4.9" stroke="#4fa184" stroke-width="1.5"/><rect x="6.6" y="0.6" width="5.4" height="5.8" fill="#3f78be"/><path d="M3.8 14.6 V9.6 C3.8 8.2 5 7.6 6.4 7.6 L9.3 10 L12.2 7.6 C13.8 7.6 14.8 8.2 14.8 9.6 V14.6 Z" fill="#3f78be"/><path d="M3.8 13.6 H14.8" stroke="#2a5a98" stroke-width="1.6"/></svg>
<span class="t s" style="top:323px;font-size:10.5px;line-height:12px;left:34.03px;color:#161616;">Assegna</span>
<svg style="left:7.4px;top:341.4px;" width="16" height="16" viewBox="0 0 16 16"><circle cx="5.8" cy="3.8" r="3" fill="#cdcdcd"/><path d="M0.4 13.6 C0.4 7.4 10.4 7.4 10.8 12 L8 13.6 Z" fill="#cdcdcd"/><path d="M8.4 9 L14.8 15 M14.8 9 L8.4 15" stroke="#bdbdbd" stroke-width="1.5"/></svg>
<span class="t s" style="top:343px;font-size:10.5px;line-height:12px;left:34.03px;color:#a9a9a9;transform:scaleX(1.0281);transform-origin:0 0;">Annulla assegnazione</span>
<div style="left:8px;top:363px;width:254px;height:1px;background:#d9d9d9;"></div>
<svg style="left:7.4px;top:370.4px;" width="16" height="16" viewBox="0 0 16 16"><path d="M0.8 0.6 H7.600000000000001 L10.600000000000001 3.6 V13.2 H0.8 Z" fill="#fdfdfd" stroke="#555" stroke-width="1.1"/><path d="M7.600000000000001 0.6 V3.6 H10.600000000000001" fill="none" stroke="#555" stroke-width="0.9900000000000001"/><path d="M2.6 3.4 H6 M2.6 5.8 H8.8 M2.6 8 H8.8 M2.6 10.2 H8.8" stroke="#9a9a9a" stroke-width="1.1"/><path d="M8 11 C8 14 10 14.4 12.4 14.4" fill="none" stroke="#2f6fc8" stroke-width="1.8"/><path d="M11.6 11.8 L15.4 14.4 L11.6 17 Z" fill="#2f6fc8"/></svg>
<span class="t s" style="top:372px;font-size:10.5px;line-height:12px;left:34.03px;color:#161616;transform:scaleX(0.9935);transform-origin:0 0;">Esporta OdS</span>
<svg style="left:7.4px;top:390.4px;" width="16" height="16" viewBox="0 0 16 16"><path d="M0.8 6.2 H8.4 L5.6 2.6 H9.8 L14.6 8.2 L9.8 13.8 H5.6 L8.4 10.2 H0.8 Z" fill="#3f78be" stroke="#1d3e78" stroke-width="0.7"/></svg>
<span class="t s" style="top:392px;font-size:10.5px;line-height:12px;left:34.03px;color:#161616;transform:scaleX(1.0110);transform-origin:0 0;">Assegna ed esporta</span>
<svg style="left:7.4px;top:410.4px;" width="16" height="16" viewBox="0 0 16 16"><circle cx="8" cy="8" r="7.3" fill="#c9c9c9"/><path d="M3.8 8.4 L6.8 11.2 L12.2 5.2" fill="none" stroke="#fff" stroke-width="2.2"/></svg>
<span class="t s" style="top:412px;font-size:10.5px;line-height:12px;left:34.03px;color:#a9a9a9;transform:scaleX(1.0369);transform-origin:0 0;">Rendi esportabile</span>
<svg style="left:7.4px;top:430.4px;" width="16" height="16" viewBox="0 0 16 16"><circle cx="8" cy="8" r="7.3" fill="#d9502c" stroke="#8a2a12" stroke-width="0.8"/><path d="M3.8 8.4 L6.8 11.2 L12.2 5.2" fill="none" stroke="#fff" stroke-width="2.2"/></svg>
<span class="t s" style="top:432px;font-size:10.5px;line-height:12px;left:34.03px;color:#161616;transform:scaleX(1.0438);transform-origin:0 0;">Rendi non esportabile</span>
<div style="left:8px;top:452px;width:254px;height:1px;background:#d9d9d9;"></div>
<svg style="left:7.4px;top:459.4px;" width="16" height="16" viewBox="0 0 16 16"><path d="M3.6 12 V3.2 H8.4 L10.4 5" fill="none" stroke="#3c3c3c" stroke-width="1.1"/><path d="M6.4 5.2 H11.4 L14.0 7.800000000000001 V14.8 H6.4 Z" fill="#fdfdfd" stroke="#3c3c3c" stroke-width="1.1"/><path d="M11.4 5.2 V7.800000000000001 H14.0" fill="none" stroke="#3c3c3c" stroke-width="0.9900000000000001"/><path d="M2.6 0.2 V5 M0.2 2.6 H5" stroke="#3a9a5c" stroke-width="1.5"/></svg>
<span class="t s" style="top:461px;font-size:10.5px;line-height:12px;left:34.03px;color:#161616;transform:scaleX(1.0164);transform-origin:0 0;">Crea spedizione</span>
<svg style="left:7.4px;top:479.4px;" width="16" height="16" viewBox="0 0 16 16"><path d="M2.6 0.2 V5 M0.2 2.6 H5" stroke="#3a9a5c" stroke-width="1.5"/><path d="M4.6 6.4 V13.6 H6.4" fill="none" stroke="#3c3c3c" stroke-width="1.1"/><path d="M7.6 1.2 H10.6 L13.4 4 V6" fill="none" stroke="#3c3c3c" stroke-width="1.1"/><circle cx="11" cy="11" r="4.4" fill="#2f6fc8" stroke="#15305e" stroke-width="0.9"/><path d="M8 10 H14 M8 12.2 H14" stroke="#e9f0fb" stroke-width="1.1"/></svg>
<span class="t s" style="top:481px;font-size:10.5px;line-height:12px;left:34.03px;color:#161616;transform:scaleX(1.0404);transform-origin:0 0;">Crea e notifica</span>
<svg style="left:7.4px;top:499.4px;" width="16" height="16" viewBox="0 0 16 16"><rect x="0.8" y="2.6" width="13" height="7" fill="#e9eff9" stroke="#3f78c8" stroke-width="1"/><path d="M2.6 5 H6.4 M2.6 7 H5.4" stroke="#9aa9bf" stroke-width="0.9"/><circle cx="9.8" cy="9.8" r="2.9" fill="#f4f4f4" stroke="#1b1b1b" stroke-width="1.6"/><path d="M11.9 12 L14.8 15" stroke="#1b1b1b" stroke-width="2"/></svg>
<span class="t s" style="top:501px;font-size:10.5px;line-height:12px;left:34.03px;color:#161616;transform:scaleX(1.0501);transform-origin:0 0;">Stima costi</span>
<div style="left:8px;top:521px;width:254px;height:1px;background:#d9d9d9;"></div>
<svg style="left:7.4px;top:528.4px;" width="16" height="16" viewBox="0 0 16 16"><path d="M0.8 4 H6 L7.4 2 H13 V13 H0.8 Z" fill="#e0e0e0"/><circle cx="11.4" cy="11.4" r="3.8" fill="#f4f4f4" stroke="#d0d0d0" stroke-width="1.2"/><path d="M11.4 13.6 V9.4 M9.6 11 L11.4 9.2 L13.2 11" fill="none" stroke="#cfcfcf" stroke-width="1.1"/></svg>
<span class="t s" style="top:530px;font-size:10.5px;line-height:12px;left:34.03px;color:#a9a9a9;transform:scaleX(1.0214);transform-origin:0 0;">Inserisci nella cartella</span>
<svg style="left:7.4px;top:548.4px;" width="16" height="16" viewBox="0 0 16 16"><path d="M0.8 3 H4 L5 1.4 H8.4 V11.6 H0.8 Z" fill="#e0e0e0"/><path d="M8 2.6 H11 L12 1 H15 V8 H8 Z" fill="#e4e4e4"/><path d="M6.4 12.4 H14 M11.6 9.8 L14.4 12.4 L11.6 15" fill="none" stroke="#cfcfcf" stroke-width="1.5"/></svg>
<span class="t s" style="top:550px;font-size:10.5px;line-height:12px;left:34.03px;color:#a9a9a9;transform:scaleX(1.0166);transform-origin:0 0;">Sposta nella cartella</span>
<svg style="left:7.4px;top:568.4px;" width="16" height="16" viewBox="0 0 16 16"><path d="M1 4.6 H5 L6 3 H9 V14 H1 Z" fill="#f1f1f1" stroke="#d2d2d2" stroke-width="1"/><path d="M7 2.8 H10 L11 1.2 H14.6 L12.8 11.6 H9" fill="#e6e6e6" stroke="#d2d2d2" stroke-width="1"/><path d="M4.6 12.6 C7.6 11.6 7 8 5.4 7.4 M3.8 9 L5.4 7.2 L7.2 8.6" fill="none" stroke="#cfcfcf" stroke-width="1.1"/></svg>
<span class="t s" style="top:570px;font-size:10.5px;line-height:12px;left:34.03px;color:#a9a9a9;transform:scaleX(1.0327);transform-origin:0 0;">Copia nella cartella</span>
<svg style="left:7.4px;top:588.4px;" width="16" height="16" viewBox="0 0 16 16"><path d="M0.8 3.6 H4.4 L5.6 1.8 H9 V13 H0.8 Z" fill="#e0e0e0"/><path d="M8.4 3 H11 L12 1.4 H15 V8.4 H8.4 Z" fill="#e6e6e6"/><path d="M8.2 9 L14.6 15.2 M14.6 9 L8.2 15.2" stroke="#c4c4c4" stroke-width="1.4"/></svg>
<span class="t s" style="top:590px;font-size:10.5px;line-height:12px;left:34.03px;color:#a9a9a9;transform:scaleX(1.0357);transform-origin:0 0;">Elimina dalla cartella</span>
<div style="left:8px;top:611px;width:254px;height:1px;background:#d9d9d9;"></div>
<svg style="left:7.4px;top:617.4px;" width="16" height="16" viewBox="0 0 16 16"><path d="M2.4 1.2 H10.0 L13.4 4.6 V14.399999999999999 H2.4 Z" fill="#fdfdfd" stroke="#3a3a3a" stroke-width="1.2"/><path d="M10.0 1.2 V4.6 H13.4" fill="none" stroke="#3a3a3a" stroke-width="1.08"/><rect x="1.8" y="8" width="7.6" height="5.4" fill="#efb84e"/><circle cx="2.8" cy="6" r="2.2" fill="#2a5fae" stroke="#14284e" stroke-width="0.8"/></svg>
<span class="t s" style="top:619px;font-size:10.5px;line-height:12px;left:34.03px;color:#161616;transform:scaleX(1.0580);transform-origin:0 0;">Situazione documento</span>
<svg style="left:7.4px;top:637.4px;" width="16" height="16" viewBox="0 0 16 16"><path d="M5.4 3.4 V1.6 H9.6 V3.4" fill="none" stroke="#4a4a4a" stroke-width="1.5"/><rect x="0.4" y="3.6" width="14.2" height="4.4" fill="#585858"/><rect x="0.4" y="9" width="14.2" height="5.4" fill="#585858"/><rect x="6.4" y="7" width="2.4" height="2.6" fill="#f4f4f4"/><path d="M13.4 3.2 V15.6" stroke="#2f6fc8" stroke-width="1.8"/><rect x="12.2" y="7.2" width="2.4" height="2" fill="#f9f9f9"/></svg>
<span class="t s" style="top:639px;font-size:10.5px;line-height:12px;left:34.03px;color:#161616;transform:scaleX(1.0564);transform-origin:0 0;">Diagnostico tabelle</span>
<svg style="left:7.4px;top:657.4px;" width="16" height="16" viewBox="0 0 16 16"><path d="M1.4 3 V14.8 H11" fill="none" stroke="#5a5a5a" stroke-width="1.1"/><rect x="3" y="1" width="10.4" height="12.2" fill="#fbfbfb" stroke="#5a5a5a" stroke-width="1.1"/><path d="M3 1.4 H13.4" stroke="#2f6fc8" stroke-width="1.4"/><path d="M4.8 4.6 H11.6 M4.8 6.6 H11.6 M4.8 8.6 H11.6 M4.8 10.6 H11.6" stroke="#9a9a9a" stroke-width="0.9"/></svg>
<span class="t s" style="top:659px;font-size:10.5px;line-height:12px;left:34.03px;color:#161616;transform:scaleX(1.0926);transform-origin:0 0;">Cronologico</span>
<div style="left:8px;top:680px;width:254px;height:1px;background:#d9d9d9;"></div>
<span class="t s" style="top:688px;font-size:10.5px;line-height:12px;left:34.03px;color:#161616;transform:scaleX(1.0733);transform-origin:0 0;">Strumenti griglia</span>
<svg style="left:250.6px;top:690px;" width="6" height="8.6" viewBox="0 0 6 8.6"><path d="M1 0.8 L4.6 4.3 L1 7.8" fill="none" stroke="#222" stroke-width="1.2"/></svg>
<div style="left:8px;top:708px;width:254px;height:1px;background:#d9d9d9;"></div>
<span class="t s" style="top:717px;font-size:10.5px;line-height:12px;left:34.03px;color:#161616;transform:scaleX(1.1077);transform-origin:0 0;">Zoom</span>
<svg style="left:250.6px;top:719px;" width="6" height="8.6" viewBox="0 0 6 8.6"><path d="M1 0.8 L4.6 4.3 L1 7.8" fill="none" stroke="#222" stroke-width="1.2"/></svg>
<span class="t s" style="top:737px;font-size:10.5px;line-height:12px;left:34.03px;color:#161616;transform:scaleX(1.0564);transform-origin:0 0;">Filtra per ""</span>
<span class="t s" style="top:757px;font-size:10.5px;line-height:12px;left:34.03px;color:#161616;transform:scaleX(1.0354);transform-origin:0 0;">Escludi per ""</span>
<span class="t s" style="top:777px;font-size:10.5px;line-height:12px;left:34.03px;color:#a9a9a9;transform:scaleX(1.1151);transform-origin:0 0;">Rimuovi tutti i filtri</span>
<div style="left:8px;top:797px;width:254px;height:1px;background:#d9d9d9;"></div>
<span class="t s" style="top:806px;font-size:10.5px;line-height:12px;left:34.03px;color:#161616;transform:scaleX(1.0588);transform-origin:0 0;">Copia contenuto cella</span>
</menu>
<div class="hl" style="left:648.8px;top:479.6px;width:158px;height:28.4px;border:3px solid #067a55;"></div>
<div style="left:0px;top:0px;width:1550px;height:2px;background:#00675f;"></div>
<div style="left:1544px;top:2px;width:6px;height:927px;background:#1b1b1b;"></div>
<div style="left:0px;top:924px;width:1550px;height:5px;background:#1b1b1b;"></div>
<svg style="left:1520px;top:829px;" width="24" height="49" viewBox="0 0 24 49"><path d="M3.4 0.2 H24 V48.2 L2.4 36 C1.2 35.2 1 34.4 1 33 V2.6 C1 1 1.8 0.2 3.4 0.2 Z" fill="#5b5b5b"/><rect x="6.2" y="7.4" width="15" height="14.6" rx="2.4" fill="#0b0e24"/><circle cx="13.7" cy="14.7" r="5.2" fill="#5b5b5b"/><path d="M10.8 14.7 H16.6 M12.2 12.9 L10.2 14.7 L12.2 16.5 M15.2 12.9 L17.2 14.7 L15.2 16.5" fill="none" stroke="#0b0e24" stroke-width="1.3"/></svg>
</body></html>
